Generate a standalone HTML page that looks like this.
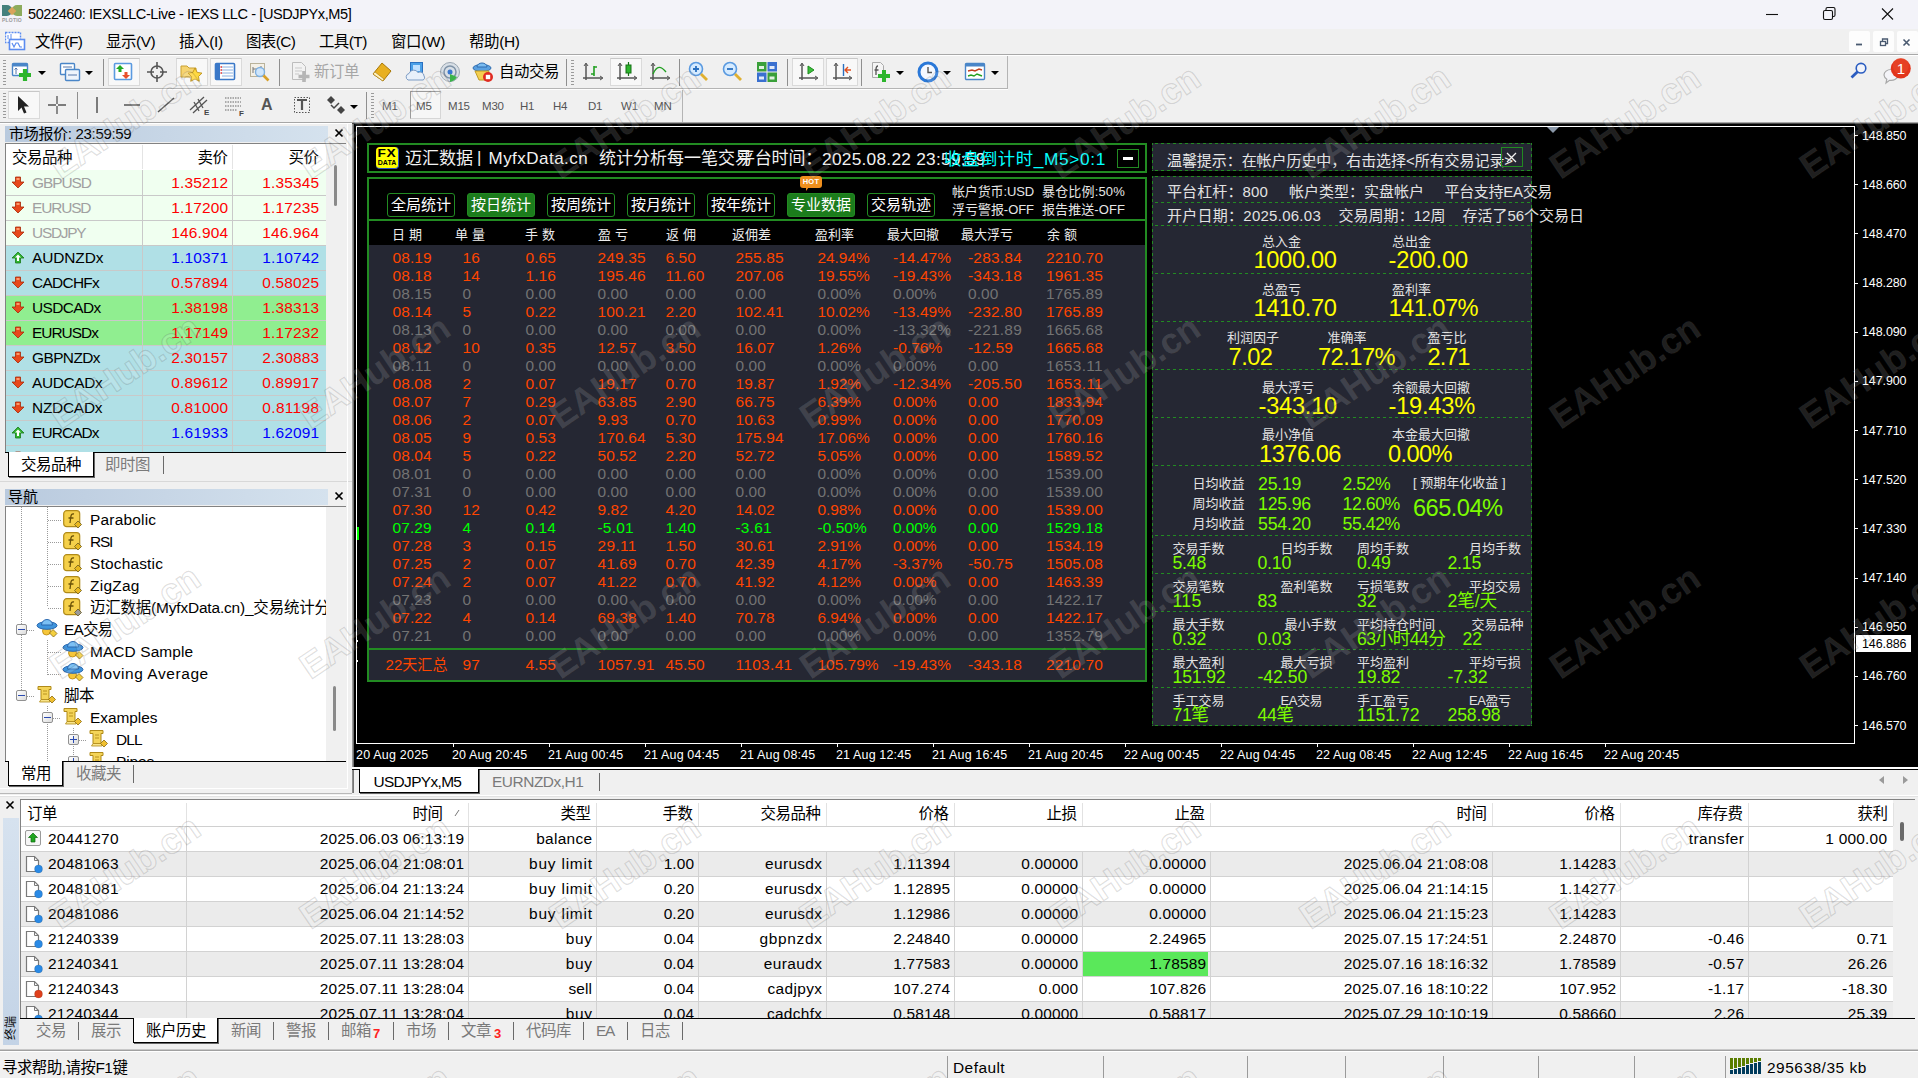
<!DOCTYPE html><html lang="zh"><head><meta charset="utf-8"><title>5022460: IEXSLLC-Live - IEXS LLC - [USDJPYx,M5]</title><style>
*{box-sizing:border-box;margin:0;padding:0}
html,body{width:1918px;height:1078px;overflow:hidden;background:#f0f0f0}
body{font-family:"Liberation Sans","Noto Sans CJK SC",sans-serif;font-size:15px;color:#000;position:relative}
.a{position:absolute;white-space:nowrap}
.t{position:absolute;white-space:nowrap;line-height:20px;height:20px}
.r{text-align:right}
.wm{position:absolute;white-space:nowrap;font-size:34px;transform:rotate(-31deg);transform-origin:0 50%;font-weight:normal;letter-spacing:1px;pointer-events:none}
</style></head><body><div class="a" style="left:0px;top:0px;width:1918px;height:29px;background:#f3f3f9"></div><div class="a" style="left:2px;top:5px;width:20px;height:18px"><div class="a" style="left:0;top:0;width:10px;height:11px;background:#44807d;border-radius:0 5px 5px 0"></div><div class="a" style="left:10px;top:0;width:10px;height:11px;background:#8dab5c;border-radius:5px 0 0 5px"></div><div class="a" style="left:7px;top:3px;width:6px;height:6px;background:#d9a45a;transform:rotate(45deg)"></div><div class="a" style="left:0;top:12px;font-size:5px;line-height:6px;color:#9a9a9a;font-weight:bold;letter-spacing:.2px">PLOTIO</div></div><div class="t" style="left:28px;top:4px;font-size:14.55px;letter-spacing:-0.416px;">5022460: IEXSLLC-Live - IEXS LLC - [USDJPYx,M5]</div><svg class="a" style="left:1750px;top:0" width="168" height="29" viewBox="0 0 168 29" fill="none" stroke="#111" stroke-width="1.1"><path d="M16 14.5h12"/><rect x="73.5" y="10.5" width="9" height="9" rx="1.5"/><path d="M76 10.5v-1.5a1.5 1.5 0 0 1 1.5-1.5h6a1.5 1.5 0 0 1 1.5 1.5v6a1.5 1.5 0 0 1-1.5 1.5h-1"/><path d="M132 8.5l11 11M143 8.5l-11 11"/></svg><div class="a" style="left:0px;top:29px;width:1918px;height:26px;background:#f0f0f0"></div><svg class="a" style="left:5px;top:31px" width="21" height="21" viewBox="0 0 21 21"><rect x="0.5" y="1.5" width="15" height="10" fill="#fff" stroke="#5b8cf0" stroke-width="1.4" stroke-dasharray="2 1"/><rect x="4.5" y="8.5" width="15" height="10" fill="#fff" stroke="#5b8cf0" stroke-width="1.6"/><path d="M7 12l2 4 2-4 2 0 2 4 2 0" fill="none" stroke="#5b8cf0" stroke-width="1.2"/><path d="M3 4v4M6 3v5" stroke="#5b8cf0" stroke-width="1"/></svg><div class="t" style="left:35px;top:32px;font-size:15.45px;letter-spacing:-0.687px;">文件(F)</div><div class="t" style="left:106px;top:32px;font-size:15.45px;letter-spacing:-0.438px;">显示(V)</div><div class="t" style="left:179px;top:32px;font-size:15.45px;letter-spacing:-0.357px;">插入(I)</div><div class="t" style="left:246px;top:32px;font-size:15.45px;letter-spacing:-0.618px;">图表(C)</div><div class="t" style="left:319px;top:32px;font-size:15.45px;letter-spacing:-0.574px;">工具(T)</div><div class="t" style="left:391px;top:32px;font-size:15.45px;letter-spacing:-0.314px;">窗口(W)</div><div class="t" style="left:469px;top:32px;font-size:15.45px;letter-spacing:-0.332px;">帮助(H)</div><div class="a" style="left:1849px;top:31px;width:21px;height:21px;background:#fdfdfd;border-radius:2px"></div><div class="a" style="left:1873px;top:31px;width:21px;height:21px;background:#fdfdfd;border-radius:2px"></div><div class="a" style="left:1897px;top:31px;width:21px;height:21px;background:#fdfdfd;border-radius:2px"></div><svg class="a" style="left:1848px;top:31px" width="70" height="21" viewBox="0 0 70 21" fill="none" stroke="#4a5a70" stroke-width="1.3"><path d="M8 13.5h6" stroke-width="1.8"/><rect x="32.5" y="10.5" width="5" height="4"/><path d="M34.5 10.5v-2.500h5v4.5h-2"/><path d="M55.500 8.5l6 6M61.500 8.5l-6 6" stroke-width="1.6"/></svg><div class="a" style="left:0px;top:54px;width:1918px;height:1px;background:#a8a8a8"></div><div class="a" style="left:0px;top:55px;width:1918px;height:1px;background:#fff"></div><div class="a" style="left:0px;top:56px;width:1918px;height:67px;background:#f0f0f0"></div><div class="a" style="left:0px;top:88px;width:1008px;height:1px;background:#b4b4b4"></div><div class="a" style="left:0px;top:89px;width:1008px;height:1px;background:#fdfdfd"></div><div class="a" style="left:1007px;top:56px;width:1px;height:33px;background:#b4b4b4"></div><div class="a" style="left:682px;top:90px;width:1px;height:32px;background:#b4b4b4"></div><div class="a" style="left:0px;top:122px;width:1918px;height:1px;background:#a6a6a6"></div><div class="a" style="left:0px;top:123px;width:354px;height:1px;background:#fff"></div><div class="a" style="left:3px;top:60px;width:3px;height:26px;background:repeating-linear-gradient(#9a9a9a 0 1px,transparent 1px 3px)"></div><div class="a" style="left:571px;top:60px;width:3px;height:26px;background:repeating-linear-gradient(#9a9a9a 0 1px,transparent 1px 3px)"></div><div class="a" style="left:3px;top:93px;width:3px;height:26px;background:repeating-linear-gradient(#9a9a9a 0 1px,transparent 1px 3px)"></div><div class="a" style="left:371px;top:93px;width:3px;height:26px;background:repeating-linear-gradient(#9a9a9a 0 1px,transparent 1px 3px)"></div><div class="a" style="left:103px;top:59px;width:1px;height:27px;background:#8f8f8f"></div><div class="a" style="left:279px;top:59px;width:1px;height:27px;background:#8f8f8f"></div><div class="a" style="left:566px;top:59px;width:1px;height:27px;background:#8f8f8f"></div><div class="a" style="left:679px;top:59px;width:1px;height:27px;background:#8f8f8f"></div><div class="a" style="left:787px;top:59px;width:1px;height:27px;background:#8f8f8f"></div><div class="a" style="left:861px;top:59px;width:1px;height:27px;background:#8f8f8f"></div><div class="a" style="left:77px;top:92px;width:1px;height:27px;background:#8f8f8f"></div><div class="a" style="left:366px;top:92px;width:1px;height:27px;background:#8f8f8f"></div><div class="a" style="left:108px;top:58px;width:32px;height:28px;background:#f8f8f8;border:1px solid #dadada;border-top-color:#c8c8c8"></div><div class="a" style="left:176px;top:58px;width:32px;height:28px;background:#f8f8f8;border:1px solid #dadada;border-top-color:#c8c8c8"></div><div class="a" style="left:210px;top:58px;width:32px;height:28px;background:#f8f8f8;border:1px solid #dadada;border-top-color:#c8c8c8"></div><div class="a" style="left:610px;top:58px;width:32px;height:28px;background:#f8f8f8;border:1px solid #dadada;border-top-color:#c8c8c8"></div><div class="a" style="left:792px;top:58px;width:32px;height:28px;background:#f8f8f8;border:1px solid #dadada;border-top-color:#c8c8c8"></div><div class="a" style="left:826px;top:58px;width:32px;height:28px;background:#f8f8f8;border:1px solid #dadada;border-top-color:#c8c8c8"></div><div class="a" style="left:8px;top:91px;width:32px;height:28px;background:#f8f8f8;border:1px solid #dadada;border-top-color:#c8c8c8"></div><div class="a" style="left:410px;top:91px;width:31px;height:28px;background:#f6f6f6;border:1px solid #d6d6d6;border-left-color:#9a9a9a;border-top-color:#9a9a9a"></div><div class="a" style="left:38px;top:71px;border-left:4px solid transparent;border-right:4px solid transparent;border-top:4px solid #000"></div><div class="a" style="left:85px;top:71px;border-left:4px solid transparent;border-right:4px solid transparent;border-top:4px solid #000"></div><div class="a" style="left:896px;top:71px;border-left:4px solid transparent;border-right:4px solid transparent;border-top:4px solid #000"></div><div class="a" style="left:943px;top:71px;border-left:4px solid transparent;border-right:4px solid transparent;border-top:4px solid #000"></div><div class="a" style="left:991px;top:71px;border-left:4px solid transparent;border-right:4px solid transparent;border-top:4px solid #000"></div><div class="a" style="left:350px;top:105px;border-left:4px solid transparent;border-right:4px solid transparent;border-top:4px solid #000"></div><svg class="a" style="left:11px;top:61px" width="22" height="22" viewBox="0 0 22 22"><rect x="1.5" y="2.5" width="15" height="12" rx="1" fill="#fff" stroke="#4a86c8" stroke-width="1.4"/><rect x="1.5" y="2.5" width="15" height="3" fill="#4a86c8"/><path d="M5 7v6M3.5 8.5L5 7l1.5 1.5" stroke="#5577aa" fill="none"/><path d="M14 8v12M8 14h12" stroke="#2cb52c" stroke-width="4.2"/></svg><svg class="a" style="left:59px;top:61px" width="22" height="22" viewBox="0 0 22 22"><rect x="1.5" y="2.5" width="14" height="11" rx="1" fill="#fff" stroke="#4a86c8" stroke-width="1.4"/><rect x="6.5" y="8.5" width="14" height="11" rx="1" fill="#eef4fb" stroke="#4a86c8" stroke-width="1.4"/><path d="M4 6h9M9 14h9" stroke="#5577aa"/></svg><svg class="a" style="left:112px;top:61px" width="22" height="22" viewBox="0 0 22 22"><rect x="2.5" y="2.5" width="17" height="16" rx="1" fill="#fff" stroke="#5a9ae0" stroke-width="1.6"/><path d="M8 4l4 4h-2.5v3h-3V8H4z" fill="#22aa22"/><path d="M14 18l-4-4h2.500v-3h3v3H18z" fill="#e8502a"/></svg><svg class="a" style="left:146px;top:61px" width="22" height="22" viewBox="0 0 22 22"><circle cx="11" cy="11" r="6" fill="none" stroke="#555" stroke-width="1.6"/><path d="M11 1v7M11 14v7M1 11h7M14 11h7" stroke="#555" stroke-width="1.6"/></svg><svg class="a" style="left:180px;top:61px" width="22" height="22" viewBox="0 0 22 22"><path d="M1 5h6l2 2h7v9H1z" fill="#f6d470" stroke="#c9a030"/><path d="M15 7l2.2 4.400 4.800.7-3.500 3.400.8 4.800L15 18l-4.300 2.300.8-4.800L8 12.100l4.800-.7z" fill="#ffd840" stroke="#b88a10" stroke-width=".8"/></svg><svg class="a" style="left:214px;top:61px" width="22" height="22" viewBox="0 0 22 22"><rect x="1.500" y="2.500" width="19" height="16" rx="1" fill="#fff" stroke="#3a78c8" stroke-width="1.6"/><rect x="2" y="3" width="4" height="15" fill="#3a78c8"/><path d="M8 6h11M8 9h11M8 12h11M8 15h11" stroke="#8ab0e0"/><path d="M6.500 6h1.500M6.500 9h1.500M6.500 12h1.500" stroke="#e03030" stroke-width="1.4"/></svg><svg class="a" style="left:249px;top:61px" width="22" height="22" viewBox="0 0 22 22"><rect x="1.500" y="2.500" width="14" height="13" fill="#f4f0e6" stroke="#b9b29a"/><path d="M4 6v6M12 5v6M4 8h8" stroke="#777"/><circle cx="11" cy="11" r="4.500" fill="#cfe6fb" stroke="#7fb0e0" stroke-width="1.400"/><path d="M14.500 14.500l5 5" stroke="#d8a028" stroke-width="2.600"/></svg><svg class="a" style="left:289px;top:61px" width="22" height="22" viewBox="0 0 22 22"><path d="M3.500 1.500h9l4 4v13h-13z" fill="#f2f2f2" stroke="#bdbdbd"/><path d="M6 7h7M6 10h7M6 13h4" stroke="#c9c9c9"/><path d="M15 10v11M9.500 15.500h11" stroke="#b5b5b5" stroke-width="3.600"/></svg><div class="t" style="left:314px;top:62px;font-size:15.45px;letter-spacing:-0.45px;color:#a6a6a6">新订单</div><svg class="a" style="left:371px;top:61px" width="22" height="22" viewBox="0 0 22 22"><path d="M2 13L11 2l9 8-8 10z" fill="#e8b020" stroke="#a87808"/><path d="M2 13l10 7 1-2L4 11z" fill="#fff2c0" stroke="#a87808" stroke-width=".6"/></svg><svg class="a" style="left:405px;top:61px" width="22" height="22" viewBox="0 0 22 22"><rect x="5.500" y="1.500" width="12" height="11" fill="#4aa0e8" stroke="#2a70c0"/><rect x="8" y="4" width="7" height="6" fill="#bfe0ff"/><path d="M3 19a3.500 3.500 0 0 1 1-6.500 5 5 0 0 1 9-1 4 4 0 0 1 6 3.500 2.500 2.500 0 0 1-1 4z" fill="#e8f0fa" stroke="#7d9cc4"/></svg><svg class="a" style="left:439px;top:61px" width="22" height="22" viewBox="0 0 22 22"><circle cx="11" cy="11" r="9.500" fill="#d8dfe6" stroke="#9aa6b2"/><circle cx="11" cy="11" r="6" fill="none" stroke="#7f93a8" stroke-width="1.500"/><circle cx="11" cy="11" r="2.500" fill="#3a78d0"/><path d="M11 21a10 10 0 0 0 7-5l-7-3z" fill="#3cb34a"/></svg><svg class="a" style="left:472px;top:61px" width="22" height="22" viewBox="0 0 22 22"><ellipse cx="10" cy="7" rx="9" ry="3.500" fill="#5aa0e0" stroke="#2f6cb0"/><path d="M5 6a5 4 0 0 1 10 0z" fill="#7bbcf0" stroke="#2f6cb0"/><path d="M3 10h14l-3 9H7z" fill="#f4cf50" stroke="#c09a20"/><circle cx="16" cy="16" r="5" fill="#e02a20"/><rect x="13.800" y="13.800" width="4.400" height="4.400" fill="#fff"/></svg><div class="t" style="left:499px;top:62px;font-size:15.45px;letter-spacing:-0.45px;">自动交易</div><svg class="a" style="left:582px;top:61px" width="22" height="22" viewBox="0 0 22 22"><path d="M4 3v16M1 17h19" stroke="#555" stroke-width="1.500" fill="none"/><path d="M2 5l2-3 2 3M18 15l3 2-3 2" fill="none" stroke="#555"/><path d="M12 5v10M12 6h3M9 13h3" stroke="#22a022" stroke-width="1.600" fill="none"/></svg><svg class="a" style="left:616px;top:61px" width="22" height="22" viewBox="0 0 22 22"><path d="M4 3v16M1 17h19" stroke="#555" stroke-width="1.500" fill="none"/><path d="M2 5l2-3 2 3M18 15l3 2-3 2" fill="none" stroke="#555"/><path d="M12.500 1v14" stroke="#167016" stroke-width="1.200"/><rect x="10" y="4" width="5" height="8" fill="#2cb52c" stroke="#167016"/></svg><svg class="a" style="left:649px;top:61px" width="22" height="22" viewBox="0 0 22 22"><path d="M4 3v16M1 17h19" stroke="#555" stroke-width="1.500" fill="none"/><path d="M2 5l2-3 2 3M18 15l3 2-3 2" fill="none" stroke="#555"/><path d="M4 13c4-9 8-8 13-2" stroke="#22a022" stroke-width="1.400" fill="none"/></svg><svg class="a" style="left:687px;top:61px" width="22" height="22" viewBox="0 0 22 22"><circle cx="9" cy="8" r="6.500" fill="#d6ebff" stroke="#5a9ae0" stroke-width="1.600"/><path d="M9 5v6M6 8h6" stroke="#2a70c0" stroke-width="1.800"/><path d="M14 13l6 6" stroke="#e0b030" stroke-width="2.800"/></svg><svg class="a" style="left:721px;top:61px" width="22" height="22" viewBox="0 0 22 22"><circle cx="9" cy="8" r="6.500" fill="#d6ebff" stroke="#5a9ae0" stroke-width="1.600"/><path d="M6 8h6" stroke="#2a70c0" stroke-width="1.800"/><path d="M14 13l6 6" stroke="#e0b030" stroke-width="2.800"/></svg><svg class="a" style="left:756px;top:61px" width="22" height="22" viewBox="0 0 22 22"><rect x="1" y="1" width="9.500" height="9.500" fill="#3aa03a"/><rect x="11.500" y="1" width="9.500" height="9.500" fill="#3a70d0"/><rect x="1" y="11.500" width="9.500" height="9.500" fill="#3a70d0"/><rect x="11.500" y="11.500" width="9.500" height="9.500" fill="#3aa03a"/><path d="M3 5h5v3H3zM13.500 5h5v3h-5zM3 15.500h5v3H3zM13.500 15.500h5v3h-5z" fill="#fff" opacity=".85"/></svg><svg class="a" style="left:797px;top:61px" width="22" height="22" viewBox="0 0 22 22"><path d="M5 3v16M2 17h18" stroke="#555" stroke-width="1.500" fill="none"/><path d="M3 5l2-3 2 3M18 15l3 2-3 2" fill="none" stroke="#555"/><path d="M11 5v8l6-4z" fill="#3cc03c" stroke="#1c8a1c"/></svg><svg class="a" style="left:831px;top:61px" width="22" height="22" viewBox="0 0 22 22"><path d="M5 3v16M2 17h18" stroke="#555" stroke-width="1.500" fill="none"/><path d="M3 5l2-3 2 3M18 15l3 2-3 2" fill="none" stroke="#555"/><path d="M12.500 3v12" stroke="#2a70c0" stroke-width="1.400"/><path d="M20 9h-6M17 6l-3 3 3 3" stroke="#e05020" stroke-width="1.400" fill="none"/></svg><svg class="a" style="left:870px;top:61px" width="22" height="22" viewBox="0 0 22 22"><path d="M2.500 1.500h8l3 3v12h-11z" fill="#f4f4f4" stroke="#aaa"/><path d="M8 5c-2 0-2 2-2 4v5M4.500 9h4" stroke="#555" stroke-width="1.300" fill="none"/><path d="M14 9v12M8 15h12" stroke="#2cb52c" stroke-width="4"/></svg><svg class="a" style="left:917px;top:61px" width="22" height="22" viewBox="0 0 22 22"><circle cx="11" cy="11" r="9" fill="#f4f8ff" stroke="#2a78d8" stroke-width="3"/><path d="M11 6v5.500h4" stroke="#555" stroke-width="1.400" fill="none"/></svg><svg class="a" style="left:964px;top:61px" width="22" height="22" viewBox="0 0 22 22"><rect x="1.500" y="2.500" width="19" height="16" rx="1" fill="#fff" stroke="#4a86c8" stroke-width="1.400"/><rect x="1.500" y="2.500" width="19" height="3" fill="#4a86c8"/><path d="M4 10l4-1 3 1 4-2 3 1" stroke="#c04020" stroke-width="1.400" fill="none"/><path d="M4 15l3-1 3 1 3-2 5 2" stroke="#22a022" stroke-width="1.400" fill="none"/></svg><svg class="a" style="left:1848px;top:60px" width="22" height="22" viewBox="0 0 22 22"><circle cx="13" cy="8.200" r="4.800" fill="#f2f4fa" stroke="#2a5cc0" stroke-width="1.600"/><path d="M9.500 11.800L3.500 17.500" stroke="#2a5cc0" stroke-width="2.800"/></svg><svg class="a" style="left:1880px;top:56px" width="34" height="30" viewBox="0 0 34 30"><path d="M4 19a7 5.500 0 0 1 14 0 7 5.500 0 0 1-8.500 5.300L6 27l.8-3.800A5.500 5.500 0 0 1 4 19z" fill="#f4f4f8" stroke="#a8a8a8" stroke-width="1.200"/><circle cx="20.800" cy="12.500" r="10" fill="#e2351c"/><circle cx="20.800" cy="10" r="8" fill="#ea4a2c" opacity=".6"/><text x="20.800" y="18" font-size="15" fill="#fff" text-anchor="middle" font-family="'Liberation Sans',sans-serif">1</text></svg><svg class="a" style="left:12px;top:94px" width="22" height="22" viewBox="0 0 22 22"><path d="M6 2v15l3.500-3.500 2.500 6 2.500-1-2.500-6h5z" fill="#222"/></svg><svg class="a" style="left:46px;top:94px" width="22" height="22" viewBox="0 0 22 22"><path d="M11 2v18M2 11h18" stroke="#555" stroke-width="1.300"/><rect x="10" y="10" width="2" height="2" fill="#f0f0f0"/></svg><svg class="a" style="left:86px;top:94px" width="22" height="22" viewBox="0 0 22 22"><path d="M11 3v16" stroke="#555" stroke-width="1.500"/></svg><svg class="a" style="left:121px;top:94px" width="22" height="22" viewBox="0 0 22 22"><path d="M3 11h16" stroke="#555" stroke-width="1.500"/></svg><svg class="a" style="left:155px;top:94px" width="22" height="22" viewBox="0 0 22 22"><path d="M3 18L19 4" stroke="#555" stroke-width="1.500"/></svg><svg class="a" style="left:188px;top:94px" width="22" height="22" viewBox="0 0 22 22"><path d="M2 16L16 3M5 19L19 6M6 8l5 9M10 5l5 9" stroke="#555" stroke-width="1.300" fill="none"/><text x="16" y="21" font-size="8" font-weight="bold" fill="#444" font-family="'Liberation Sans',sans-serif">E</text></svg><svg class="a" style="left:223px;top:94px" width="22" height="22" viewBox="0 0 22 22"><path d="M2 4h16M2 8h16M2 12h16M2 16h12" stroke="#666" stroke-width="1.200" stroke-dasharray="1.500 1"/><text x="16" y="22" font-size="8" font-weight="bold" fill="#444" font-family="'Liberation Sans',sans-serif">F</text></svg><div class="t" style="left:261px;top:95px;font-size:16px;font-weight:bold;color:#555">A</div><svg class="a" style="left:291px;top:94px" width="22" height="22" viewBox="0 0 22 22"><rect x="3.500" y="3.500" width="15" height="15" fill="none" stroke="#555" stroke-dasharray="1.500 1.500"/><path d="M6 6h10M11 6v10" stroke="#555" stroke-width="2.200"/></svg><svg class="a" style="left:325px;top:94px" width="22" height="22" viewBox="0 0 22 22"><path d="M6 2l4 4-4 4-4-4zM16 12l4 4-4 4-4-4z" fill="#444"/><path d="M6 11l3 3 5-5" stroke="#444" stroke-width="1.500" fill="none"/></svg><div class="t" style="left:382px;top:96px;font-size:11.500px;color:#555;letter-spacing:-.2px">M1</div><div class="t" style="left:416px;top:96px;font-size:11.500px;color:#555;letter-spacing:-.2px">M5</div><div class="t" style="left:448px;top:96px;font-size:11.500px;color:#555;letter-spacing:-.2px">M15</div><div class="t" style="left:482px;top:96px;font-size:11.500px;color:#555;letter-spacing:-.2px">M30</div><div class="t" style="left:520px;top:96px;font-size:11.500px;color:#555;letter-spacing:-.2px">H1</div><div class="t" style="left:553px;top:96px;font-size:11.500px;color:#555;letter-spacing:-.2px">H4</div><div class="t" style="left:588px;top:96px;font-size:11.500px;color:#555;letter-spacing:-.2px">D1</div><div class="t" style="left:621px;top:96px;font-size:11.500px;color:#555;letter-spacing:-.2px">W1</div><div class="t" style="left:654px;top:96px;font-size:11.500px;color:#555;letter-spacing:-.2px">MN</div><div class="a" style="left:0px;top:124px;width:352px;height:364px;background:#f0f0f0"></div><div class="a" style="left:5px;top:126px;width:323px;height:16px;background:linear-gradient(90deg,#b9cade,#d5e2ee)"></div><div class="t" style="left:9px;top:124px;font-size:15px;letter-spacing:-0.31px;">市场报价: 23:59:59</div><svg class="a" style="left:334px;top:128px" width="10" height="10" viewBox="0 0 10 10"><path d="M1.5 1.500l7 7M8.500 1.500l-7 7" stroke="#000" stroke-width="1.700"/></svg><div class="a" style="left:5px;top:143px;width:341px;height:310px;background:#fff;border:1px solid #828282;border-right:0;border-bottom:0"></div><div class="a" style="left:326px;top:144px;width:20px;height:309px;background:#f0f0f0"></div><div class="a" style="left:334px;top:165px;width:3px;height:41px;background:#8a8a8a;border-radius:2px"></div><div class="t" style="left:12px;top:148px;font-size:15.45px;letter-spacing:-0.45px;">交易品种</div><div class="t r" style="left:-272px;width:500px;top:148px;margin-left:-0.45px;font-size:15.45px;letter-spacing:-0.45px;">卖价</div><div class="t r" style="left:-181px;width:500px;top:148px;margin-left:-0.45px;font-size:15.45px;letter-spacing:-0.45px;">买价</div><div class="a" style="left:142px;top:145px;width:1px;height:24px;background:#e4e4e4"></div><div class="a" style="left:232px;top:145px;width:1px;height:24px;background:#e4e4e4"></div><div class="a" style="left:6px;top:170px;width:320px;height:283px;overflow:hidden"><div class="a" style="left:0px;top:0px;width:320px;height:26px;background:#f0fff0"></div><div class="a" style="left:0px;top:25px;width:320px;height:1px;background:#c9c9c9"></div><div class="a" style="left:136px;top:0px;width:1px;height:26px;background:#c9c9c9"></div><div class="a" style="left:226px;top:0px;width:1px;height:26px;background:#c9c9c9"></div><svg class="a" style="left:5px;top:6px" width="14" height="13" viewBox="0 0 14 13"><path d="M7 12L1 6h3.500V1h5v5H13z" fill="#e8481c" stroke="#a82a08" stroke-width=".8"/><path d="M5.500 2h3v2h-3z" fill="#ff9a6a"/></svg><div class="t" style="left:26px;top:3px;font-size:15.45px;letter-spacing:-1.066px;color:#a0a0a0">GBPUSD</div><div class="t r" style="left:-278px;width:500px;top:3px;margin-left:0.165px;font-size:15.45px;letter-spacing:0.165px;color:#ff0000">1.35212</div><div class="t r" style="left:-187px;width:500px;top:3px;margin-left:0.165px;font-size:15.45px;letter-spacing:0.165px;color:#ff0000">1.35345</div><div class="a" style="left:0px;top:26px;width:320px;height:25px;background:#f0fff0"></div><div class="a" style="left:0px;top:50px;width:320px;height:1px;background:#c9c9c9"></div><div class="a" style="left:136px;top:25px;width:1px;height:26px;background:#c9c9c9"></div><div class="a" style="left:226px;top:25px;width:1px;height:26px;background:#c9c9c9"></div><svg class="a" style="left:5px;top:31px" width="14" height="13" viewBox="0 0 14 13"><path d="M7 12L1 6h3.500V1h5v5H13z" fill="#e8481c" stroke="#a82a08" stroke-width=".8"/><path d="M5.500 2h3v2h-3z" fill="#ff9a6a"/></svg><div class="t" style="left:26px;top:28px;font-size:15.45px;letter-spacing:-1.14px;color:#a0a0a0">EURUSD</div><div class="t r" style="left:-278px;width:500px;top:28px;margin-left:0.165px;font-size:15.45px;letter-spacing:0.165px;color:#ff0000">1.17200</div><div class="t r" style="left:-187px;width:500px;top:28px;margin-left:0.165px;font-size:15.45px;letter-spacing:0.165px;color:#ff0000">1.17235</div><div class="a" style="left:0px;top:51px;width:320px;height:25px;background:#f0fff0"></div><div class="a" style="left:0px;top:75px;width:320px;height:1px;background:#c9c9c9"></div><div class="a" style="left:136px;top:50px;width:1px;height:26px;background:#c9c9c9"></div><div class="a" style="left:226px;top:50px;width:1px;height:26px;background:#c9c9c9"></div><svg class="a" style="left:5px;top:56px" width="14" height="13" viewBox="0 0 14 13"><path d="M7 12L1 6h3.500V1h5v5H13z" fill="#e8481c" stroke="#a82a08" stroke-width=".8"/><path d="M5.500 2h3v2h-3z" fill="#ff9a6a"/></svg><div class="t" style="left:26px;top:53px;font-size:15.45px;letter-spacing:-1.266px;color:#a0a0a0">USDJPY</div><div class="t r" style="left:-278px;width:500px;top:53px;margin-left:0.165px;font-size:15.45px;letter-spacing:0.165px;color:#ff0000">146.904</div><div class="t r" style="left:-187px;width:500px;top:53px;margin-left:0.165px;font-size:15.45px;letter-spacing:0.165px;color:#ff0000">146.964</div><div class="a" style="left:0px;top:76px;width:320px;height:25px;background:#b0e0e6"></div><div class="a" style="left:0px;top:100px;width:320px;height:1px;background:#c9c9c9"></div><div class="a" style="left:136px;top:75px;width:1px;height:26px;background:#c9c9c9"></div><div class="a" style="left:226px;top:75px;width:1px;height:26px;background:#c9c9c9"></div><svg class="a" style="left:5px;top:81px" width="14" height="13" viewBox="0 0 14 13"><path d="M7 1l6 6H9.500v5h-5V7H1z" fill="#2fb52f" stroke="#1a7a1a" stroke-width=".8"/><path d="M7 3.500l3 3H8v3.500H6V6.500H4z" fill="#fff"/></svg><div class="t" style="left:26px;top:78px;font-size:15.45px;letter-spacing:-0.1px;color:#000">AUDNZDx</div><div class="t r" style="left:-278px;width:500px;top:78px;margin-left:0.165px;font-size:15.45px;letter-spacing:0.165px;color:#0000ff">1.10371</div><div class="t r" style="left:-187px;width:500px;top:78px;margin-left:0.165px;font-size:15.45px;letter-spacing:0.165px;color:#0000ff">1.10742</div><div class="a" style="left:0px;top:101px;width:320px;height:25px;background:#b0e0e6"></div><div class="a" style="left:0px;top:125px;width:320px;height:1px;background:#c9c9c9"></div><div class="a" style="left:136px;top:100px;width:1px;height:26px;background:#c9c9c9"></div><div class="a" style="left:226px;top:100px;width:1px;height:26px;background:#c9c9c9"></div><svg class="a" style="left:5px;top:106px" width="14" height="13" viewBox="0 0 14 13"><path d="M7 12L1 6h3.500V1h5v5H13z" fill="#e8481c" stroke="#a82a08" stroke-width=".8"/><path d="M5.500 2h3v2h-3z" fill="#ff9a6a"/></svg><div class="t" style="left:26px;top:103px;font-size:15.45px;letter-spacing:-0.708px;color:#000">CADCHFx</div><div class="t r" style="left:-278px;width:500px;top:103px;margin-left:0.165px;font-size:15.45px;letter-spacing:0.165px;color:#ff0000">0.57894</div><div class="t r" style="left:-187px;width:500px;top:103px;margin-left:0.165px;font-size:15.45px;letter-spacing:0.165px;color:#ff0000">0.58025</div><div class="a" style="left:0px;top:126px;width:320px;height:25px;background:#90ee90"></div><div class="a" style="left:0px;top:150px;width:320px;height:1px;background:#c9c9c9"></div><div class="a" style="left:136px;top:125px;width:1px;height:26px;background:#c9c9c9"></div><div class="a" style="left:226px;top:125px;width:1px;height:26px;background:#c9c9c9"></div><svg class="a" style="left:5px;top:131px" width="14" height="13" viewBox="0 0 14 13"><path d="M7 12L1 6h3.500V1h5v5H13z" fill="#e8481c" stroke="#a82a08" stroke-width=".8"/><path d="M5.500 2h3v2h-3z" fill="#ff9a6a"/></svg><div class="t" style="left:26px;top:128px;font-size:15.45px;letter-spacing:-0.605px;color:#000">USDCADx</div><div class="t r" style="left:-278px;width:500px;top:128px;margin-left:0.165px;font-size:15.45px;letter-spacing:0.165px;color:#ff0000">1.38198</div><div class="t r" style="left:-187px;width:500px;top:128px;margin-left:0.165px;font-size:15.45px;letter-spacing:0.165px;color:#ff0000">1.38313</div><div class="a" style="left:0px;top:151px;width:320px;height:25px;background:#90ee90"></div><div class="a" style="left:0px;top:175px;width:320px;height:1px;background:#c9c9c9"></div><div class="a" style="left:136px;top:150px;width:1px;height:26px;background:#c9c9c9"></div><div class="a" style="left:226px;top:150px;width:1px;height:26px;background:#c9c9c9"></div><svg class="a" style="left:5px;top:156px" width="14" height="13" viewBox="0 0 14 13"><path d="M7 12L1 6h3.500V1h5v5H13z" fill="#e8481c" stroke="#a82a08" stroke-width=".8"/><path d="M5.500 2h3v2h-3z" fill="#ff9a6a"/></svg><div class="t" style="left:26px;top:153px;font-size:15.45px;letter-spacing:-0.999px;color:#000">EURUSDx</div><div class="t r" style="left:-278px;width:500px;top:153px;margin-left:0.165px;font-size:15.45px;letter-spacing:0.165px;color:#ff0000">1.17149</div><div class="t r" style="left:-187px;width:500px;top:153px;margin-left:0.165px;font-size:15.45px;letter-spacing:0.165px;color:#ff0000">1.17232</div><div class="a" style="left:0px;top:176px;width:320px;height:25px;background:#b0e0e6"></div><div class="a" style="left:0px;top:200px;width:320px;height:1px;background:#c9c9c9"></div><div class="a" style="left:136px;top:175px;width:1px;height:26px;background:#c9c9c9"></div><div class="a" style="left:226px;top:175px;width:1px;height:26px;background:#c9c9c9"></div><svg class="a" style="left:5px;top:181px" width="14" height="13" viewBox="0 0 14 13"><path d="M7 12L1 6h3.500V1h5v5H13z" fill="#e8481c" stroke="#a82a08" stroke-width=".8"/><path d="M5.500 2h3v2h-3z" fill="#ff9a6a"/></svg><div class="t" style="left:26px;top:178px;font-size:15.45px;letter-spacing:-0.581px;color:#000">GBPNZDx</div><div class="t r" style="left:-278px;width:500px;top:178px;margin-left:0.165px;font-size:15.45px;letter-spacing:0.165px;color:#ff0000">2.30157</div><div class="t r" style="left:-187px;width:500px;top:178px;margin-left:0.165px;font-size:15.45px;letter-spacing:0.165px;color:#ff0000">2.30883</div><div class="a" style="left:0px;top:201px;width:320px;height:25px;background:#b0e0e6"></div><div class="a" style="left:0px;top:225px;width:320px;height:1px;background:#c9c9c9"></div><div class="a" style="left:136px;top:200px;width:1px;height:26px;background:#c9c9c9"></div><div class="a" style="left:226px;top:200px;width:1px;height:26px;background:#c9c9c9"></div><svg class="a" style="left:5px;top:206px" width="14" height="13" viewBox="0 0 14 13"><path d="M7 12L1 6h3.500V1h5v5H13z" fill="#e8481c" stroke="#a82a08" stroke-width=".8"/><path d="M5.500 2h3v2h-3z" fill="#ff9a6a"/></svg><div class="t" style="left:26px;top:203px;font-size:15.45px;letter-spacing:-0.348px;color:#000">AUDCADx</div><div class="t r" style="left:-278px;width:500px;top:203px;margin-left:0.165px;font-size:15.45px;letter-spacing:0.165px;color:#ff0000">0.89612</div><div class="t r" style="left:-187px;width:500px;top:203px;margin-left:0.165px;font-size:15.45px;letter-spacing:0.165px;color:#ff0000">0.89917</div><div class="a" style="left:0px;top:226px;width:320px;height:25px;background:#b0e0e6"></div><div class="a" style="left:0px;top:250px;width:320px;height:1px;background:#c9c9c9"></div><div class="a" style="left:136px;top:225px;width:1px;height:26px;background:#c9c9c9"></div><div class="a" style="left:226px;top:225px;width:1px;height:26px;background:#c9c9c9"></div><svg class="a" style="left:5px;top:231px" width="14" height="13" viewBox="0 0 14 13"><path d="M7 12L1 6h3.500V1h5v5H13z" fill="#e8481c" stroke="#a82a08" stroke-width=".8"/><path d="M5.500 2h3v2h-3z" fill="#ff9a6a"/></svg><div class="t" style="left:26px;top:228px;font-size:15.45px;letter-spacing:-0.251px;color:#000">NZDCADx</div><div class="t r" style="left:-278px;width:500px;top:228px;margin-left:0.165px;font-size:15.45px;letter-spacing:0.165px;color:#ff0000">0.81000</div><div class="t r" style="left:-187px;width:500px;top:228px;margin-left:0.329px;font-size:15.45px;letter-spacing:0.329px;color:#ff0000">0.81198</div><div class="a" style="left:0px;top:251px;width:320px;height:25px;background:#b0e0e6"></div><div class="a" style="left:0px;top:275px;width:320px;height:1px;background:#c9c9c9"></div><div class="a" style="left:136px;top:250px;width:1px;height:26px;background:#c9c9c9"></div><div class="a" style="left:226px;top:250px;width:1px;height:26px;background:#c9c9c9"></div><svg class="a" style="left:5px;top:256px" width="14" height="13" viewBox="0 0 14 13"><path d="M7 1l6 6H9.500v5h-5V7H1z" fill="#2fb52f" stroke="#1a7a1a" stroke-width=".8"/><path d="M7 3.500l3 3H8v3.500H6V6.500H4z" fill="#fff"/></svg><div class="t" style="left:26px;top:253px;font-size:15.45px;letter-spacing:-0.892px;color:#000">EURCADx</div><div class="t r" style="left:-278px;width:500px;top:253px;margin-left:0.165px;font-size:15.45px;letter-spacing:0.165px;color:#0000ff">1.61933</div><div class="t r" style="left:-187px;width:500px;top:253px;margin-left:0.165px;font-size:15.45px;letter-spacing:0.165px;color:#0000ff">1.62091</div><div class="a" style="left:0px;top:276px;width:320px;height:25px;background:#b0e0e6"></div><div class="a" style="left:0px;top:300px;width:320px;height:1px;background:#c9c9c9"></div><div class="a" style="left:136px;top:275px;width:1px;height:26px;background:#c9c9c9"></div><div class="a" style="left:226px;top:275px;width:1px;height:26px;background:#c9c9c9"></div><svg class="a" style="left:5px;top:281px" width="14" height="13" viewBox="0 0 14 13"><path d="M7 12L1 6h3.500V1h5v5H13z" fill="#e8481c" stroke="#a82a08" stroke-width=".8"/><path d="M5.500 2h3v2h-3z" fill="#ff9a6a"/></svg><div class="t" style="left:26px;top:278px;font-size:15.45px;letter-spacing:-0.829px;color:#000">GBPCADx</div><div class="t r" style="left:-278px;width:500px;top:278px;margin-left:0.165px;font-size:15.45px;letter-spacing:0.165px;color:#ff0000">1.86971</div><div class="t r" style="left:-187px;width:500px;top:278px;margin-left:0.165px;font-size:15.45px;letter-spacing:0.165px;color:#ff0000">1.87471</div></div><div class="a" style="left:5px;top:452px;width:341px;height:1px;background:#000"></div><div class="a" style="left:5px;top:453px;width:341px;height:28px;background:#f0f0f0"></div><div class="a" style="left:8px;top:452px;width:86px;height:25px;background:#fff;border:1px solid #000;border-top:0;box-shadow:1px 1px 0 #666"></div><div class="t" style="left:21px;top:455px;font-size:15.45px;letter-spacing:-0.45px;">交易品种</div><div class="t" style="left:105px;top:455px;font-size:15.45px;letter-spacing:-0.45px;color:#7a7a7a">即时图</div><div class="a" style="left:163px;top:456px;width:1px;height:18px;background:#6a6a6a"></div><div class="a" style="left:0px;top:481px;width:354px;height:1px;background:#d8d8d8"></div><div class="a" style="left:5px;top:489px;width:323px;height:16px;background:linear-gradient(90deg,#b9cade,#d5e2ee)"></div><div class="t" style="left:8px;top:487px;font-size:15px;letter-spacing:0.0px;">导航</div><svg class="a" style="left:334px;top:491px" width="10" height="10" viewBox="0 0 10 10"><path d="M1.500 1.500l7 7M8.500 1.500l-7 7" stroke="#000" stroke-width="1.700"/></svg><div class="a" style="left:5px;top:506px;width:341px;height:256px;background:#fff;border:1px solid #828282;border-right:0;border-bottom:0"></div><div class="a" style="left:326px;top:507px;width:20px;height:255px;background:#f0f0f0"></div><div class="a" style="left:333px;top:686px;width:3px;height:45px;background:#8a8a8a;border-radius:2px"></div><div class="a" style="left:6px;top:507px;width:320px;height:255px;overflow:hidden"><div class="a" style="left:15px;top:0px;width:1px;height:188px;background:repeating-linear-gradient(#9a9a9a 0 1px,transparent 1px 2px)"></div><div class="a" style="left:41px;top:0px;width:1px;height:100px;background:repeating-linear-gradient(#9a9a9a 0 1px,transparent 1px 2px)"></div><div class="a" style="left:42px;top:13px;width:14px;height:1px;background:repeating-linear-gradient(90deg,#9a9a9a 0 1px,transparent 1px 2px)"></div><svg class="a" style="left:57px;top:3px" width="20" height="19" viewBox="0 0 20 19"><rect x=".7" y=".7" width="16" height="16" rx="3" fill="#f5d04a" stroke="#b08a18" stroke-width="1.200"/><path d="M11 4c-2.500-.5-3 1-3.300 3.500L7 13M5.500 8h5" stroke="#6a5208" stroke-width="1.300" fill="none"/><path d="M15 11l3.500 3.500L15 18l-3.500-3.500z" fill="#e8b820" stroke="#6a5a20" stroke-width=".8"/></svg><div class="t" style="left:84px;top:3px;font-size:15.45px;letter-spacing:0.214px;">Parabolic</div><div class="a" style="left:42px;top:35px;width:14px;height:1px;background:repeating-linear-gradient(90deg,#9a9a9a 0 1px,transparent 1px 2px)"></div><svg class="a" style="left:57px;top:25px" width="20" height="19" viewBox="0 0 20 19"><rect x=".7" y=".7" width="16" height="16" rx="3" fill="#f5d04a" stroke="#b08a18" stroke-width="1.200"/><path d="M11 4c-2.500-.5-3 1-3.300 3.500L7 13M5.500 8h5" stroke="#6a5208" stroke-width="1.300" fill="none"/><path d="M15 11l3.500 3.500L15 18l-3.500-3.500z" fill="#e8b820" stroke="#6a5a20" stroke-width=".8"/></svg><div class="t" style="left:84px;top:25px;font-size:15.45px;letter-spacing:-1.261px;">RSI</div><div class="a" style="left:42px;top:57px;width:14px;height:1px;background:repeating-linear-gradient(90deg,#9a9a9a 0 1px,transparent 1px 2px)"></div><svg class="a" style="left:57px;top:47px" width="20" height="19" viewBox="0 0 20 19"><rect x=".7" y=".7" width="16" height="16" rx="3" fill="#f5d04a" stroke="#b08a18" stroke-width="1.200"/><path d="M11 4c-2.500-.5-3 1-3.300 3.500L7 13M5.500 8h5" stroke="#6a5208" stroke-width="1.300" fill="none"/><path d="M15 11l3.500 3.500L15 18l-3.500-3.500z" fill="#e8b820" stroke="#6a5a20" stroke-width=".8"/></svg><div class="t" style="left:84px;top:47px;font-size:15.45px;letter-spacing:0.189px;">Stochastic</div><div class="a" style="left:42px;top:79px;width:14px;height:1px;background:repeating-linear-gradient(90deg,#9a9a9a 0 1px,transparent 1px 2px)"></div><svg class="a" style="left:57px;top:69px" width="20" height="19" viewBox="0 0 20 19"><rect x=".7" y=".7" width="16" height="16" rx="3" fill="#f5d04a" stroke="#b08a18" stroke-width="1.200"/><path d="M11 4c-2.500-.5-3 1-3.300 3.500L7 13M5.500 8h5" stroke="#6a5208" stroke-width="1.300" fill="none"/><path d="M15 11l3.500 3.500L15 18l-3.500-3.500z" fill="#e8b820" stroke="#6a5a20" stroke-width=".8"/></svg><div class="t" style="left:84px;top:69px;font-size:15.45px;letter-spacing:0.279px;">ZigZag</div><div class="a" style="left:42px;top:101px;width:14px;height:1px;background:repeating-linear-gradient(90deg,#9a9a9a 0 1px,transparent 1px 2px)"></div><svg class="a" style="left:57px;top:91px" width="20" height="19" viewBox="0 0 20 19"><rect x=".7" y=".7" width="16" height="16" rx="3" fill="#f5d04a" stroke="#b08a18" stroke-width="1.200"/><path d="M11 4c-2.500-.5-3 1-3.300 3.500L7 13M5.500 8h5" stroke="#6a5208" stroke-width="1.300" fill="none"/><path d="M15 11l3.500 3.500L15 18l-3.500-3.500z" fill="#9a9a9a" stroke="#6a5a20" stroke-width=".8"/></svg><div class="t" style="left:84px;top:91px;font-size:15.45px;letter-spacing:-0.169px;">迈汇数据(MyfxData.cn)_交易统计分析</div><div class="a" style="left:10px;top:117px;width:11px;height:11px;border:1px solid #919191;border-radius:2px;background:linear-gradient(135deg,#fff,#dcdcdc)"></div><div class="a" style="left:12px;top:122px;width:7px;height:1px;background:#2a4ab0"></div><div class="a" style="left:21px;top:123px;width:8px;height:1px;background:repeating-linear-gradient(90deg,#9a9a9a 0 1px,transparent 1px 2px)"></div><svg class="a" style="left:30px;top:111px" width="24" height="21" viewBox="0 0 24 21"><circle cx="10.500" cy="13" r="4" fill="#f6c63a" stroke="#b8860b" stroke-width=".8"/><ellipse cx="11" cy="7.500" rx="10" ry="3.800" fill="#3f95dd" stroke="#2a68b0"/><path d="M5.500 7a5.500 5.500 0 0 1 11 0z" fill="#7cc0f4" stroke="#2a68b0"/><path d="M17 11.500l4 4-3.500 3.500-4-4z" fill="#f4d040" stroke="#8a6a10" stroke-width=".8"/></svg><div class="t" style="left:58px;top:113px;font-size:15.45px;letter-spacing:-0.846px;">EA交易</div><div class="a" style="left:41px;top:133px;width:1px;height:35px;background:repeating-linear-gradient(#9a9a9a 0 1px,transparent 1px 2px)"></div><div class="a" style="left:42px;top:145px;width:14px;height:1px;background:repeating-linear-gradient(90deg,#9a9a9a 0 1px,transparent 1px 2px)"></div><svg class="a" style="left:56px;top:133px" width="24" height="21" viewBox="0 0 24 21"><circle cx="10.500" cy="13" r="4" fill="#f6c63a" stroke="#b8860b" stroke-width=".8"/><ellipse cx="11" cy="7.500" rx="10" ry="3.800" fill="#3f95dd" stroke="#2a68b0"/><path d="M5.500 7a5.500 5.500 0 0 1 11 0z" fill="#7cc0f4" stroke="#2a68b0"/><path d="M17 11.500l4 4-3.500 3.500-4-4z" fill="#f4d040" stroke="#8a6a10" stroke-width=".8"/></svg><div class="t" style="left:84px;top:135px;font-size:15.45px;letter-spacing:0.104px;">MACD Sample</div><div class="a" style="left:42px;top:167px;width:14px;height:1px;background:repeating-linear-gradient(90deg,#9a9a9a 0 1px,transparent 1px 2px)"></div><svg class="a" style="left:56px;top:155px" width="24" height="21" viewBox="0 0 24 21"><circle cx="10.500" cy="13" r="4" fill="#f6c63a" stroke="#b8860b" stroke-width=".8"/><ellipse cx="11" cy="7.500" rx="10" ry="3.800" fill="#3f95dd" stroke="#2a68b0"/><path d="M5.500 7a5.500 5.500 0 0 1 11 0z" fill="#7cc0f4" stroke="#2a68b0"/><path d="M17 11.500l4 4-3.500 3.500-4-4z" fill="#f4d040" stroke="#8a6a10" stroke-width=".8"/></svg><div class="t" style="left:84px;top:157px;font-size:15.45px;letter-spacing:0.595px;">Moving Average</div><div class="a" style="left:10px;top:183px;width:11px;height:11px;border:1px solid #919191;border-radius:2px;background:linear-gradient(135deg,#fff,#dcdcdc)"></div><div class="a" style="left:12px;top:188px;width:7px;height:1px;background:#2a4ab0"></div><div class="a" style="left:21px;top:189px;width:8px;height:1px;background:repeating-linear-gradient(90deg,#9a9a9a 0 1px,transparent 1px 2px)"></div><svg class="a" style="left:30px;top:178px" width="22" height="20" viewBox="0 0 22 20"><path d="M2 1.500h13v3h-2v10H5v-10H2z" fill="#f4d458" stroke="#b08a18"/><path d="M5 14.500h9v2.500H3.500z" fill="#f9e48a" stroke="#b08a18" stroke-width=".8"/><path d="M7 6h4M7 9h4" stroke="#b08a18" stroke-width=".9"/><path d="M16 11l3.500 3.500L16 18l-3.500-3.500z" fill="#f0c030" stroke="#8a6a10" stroke-width=".8"/></svg><div class="t" style="left:58px;top:179px;font-size:15.45px;letter-spacing:-0.45px;">脚本</div><div class="a" style="left:41px;top:199px;width:1px;height:70px;background:repeating-linear-gradient(#9a9a9a 0 1px,transparent 1px 2px)"></div><div class="a" style="left:36px;top:205px;width:11px;height:11px;border:1px solid #919191;border-radius:2px;background:linear-gradient(135deg,#fff,#dcdcdc)"></div><div class="a" style="left:38px;top:210px;width:7px;height:1px;background:#2a4ab0"></div><div class="a" style="left:47px;top:211px;width:8px;height:1px;background:repeating-linear-gradient(90deg,#9a9a9a 0 1px,transparent 1px 2px)"></div><svg class="a" style="left:56px;top:200px" width="22" height="20" viewBox="0 0 22 20"><path d="M2 1.500h13v3h-2v10H5v-10H2z" fill="#f4d458" stroke="#b08a18"/><path d="M5 14.500h9v2.500H3.500z" fill="#f9e48a" stroke="#b08a18" stroke-width=".8"/><path d="M7 6h4M7 9h4" stroke="#b08a18" stroke-width=".9"/><path d="M16 11l3.500 3.500L16 18l-3.500-3.500z" fill="#f0c030" stroke="#8a6a10" stroke-width=".8"/></svg><div class="t" style="left:84px;top:201px;font-size:15.45px;letter-spacing:-0.048px;">Examples</div><div class="a" style="left:67px;top:221px;width:1px;height:40px;background:repeating-linear-gradient(#9a9a9a 0 1px,transparent 1px 2px)"></div><div class="a" style="left:62px;top:227px;width:11px;height:11px;border:1px solid #919191;border-radius:2px;background:linear-gradient(135deg,#fff,#dcdcdc)"></div><div class="a" style="left:64px;top:232px;width:7px;height:1px;background:#2a4ab0"></div><div class="a" style="left:67px;top:229px;width:1px;height:7px;background:#2a4ab0"></div><div class="a" style="left:73px;top:233px;width:8px;height:1px;background:repeating-linear-gradient(90deg,#9a9a9a 0 1px,transparent 1px 2px)"></div><svg class="a" style="left:82px;top:222px" width="22" height="20" viewBox="0 0 22 20"><path d="M2 1.500h13v3h-2v10H5v-10H2z" fill="#f4d458" stroke="#b08a18"/><path d="M5 14.500h9v2.500H3.500z" fill="#f9e48a" stroke="#b08a18" stroke-width=".8"/><path d="M7 6h4M7 9h4" stroke="#b08a18" stroke-width=".9"/><path d="M16 11l3.500 3.500L16 18l-3.500-3.500z" fill="#f0c030" stroke="#8a6a10" stroke-width=".8"/></svg><div class="t" style="left:110px;top:223px;font-size:15.45px;letter-spacing:-0.829px;">DLL</div><div class="a" style="left:62px;top:249px;width:11px;height:11px;border:1px solid #919191;border-radius:2px;background:linear-gradient(135deg,#fff,#dcdcdc)"></div><div class="a" style="left:64px;top:254px;width:7px;height:1px;background:#2a4ab0"></div><div class="a" style="left:67px;top:251px;width:1px;height:7px;background:#2a4ab0"></div><div class="a" style="left:73px;top:255px;width:8px;height:1px;background:repeating-linear-gradient(90deg,#9a9a9a 0 1px,transparent 1px 2px)"></div><svg class="a" style="left:82px;top:244px" width="22" height="20" viewBox="0 0 22 20"><path d="M2 1.500h13v3h-2v10H5v-10H2z" fill="#f4d458" stroke="#b08a18"/><path d="M5 14.500h9v2.500H3.500z" fill="#f9e48a" stroke="#b08a18" stroke-width=".8"/><path d="M7 6h4M7 9h4" stroke="#b08a18" stroke-width=".9"/><path d="M16 11l3.500 3.500L16 18l-3.500-3.500z" fill="#f0c030" stroke="#8a6a10" stroke-width=".8"/></svg><div class="t" style="left:110px;top:245px;font-size:15.45px;letter-spacing:-0.1px;">Pipes</div></div><div class="a" style="left:5px;top:761px;width:341px;height:1px;background:#000"></div><div class="a" style="left:5px;top:762px;width:341px;height:26px;background:#f0f0f0"></div><div class="a" style="left:8px;top:761px;width:55px;height:25px;background:#fff;border:1px solid #000;border-top:0;box-shadow:1px 1px 0 #666"></div><div class="t" style="left:21px;top:764px;font-size:15.45px;letter-spacing:-0.45px;">常用</div><div class="t" style="left:76px;top:764px;font-size:15.45px;letter-spacing:-0.45px;color:#7a7a7a">收藏夹</div><div class="a" style="left:133px;top:765px;width:1px;height:18px;background:#6a6a6a"></div><div class="a" style="left:0px;top:788px;width:348px;height:1px;background:#fff"></div><div class="a" style="left:347px;top:123px;width:1px;height:666px;background:#fff"></div><div class="a" style="left:0px;top:793px;width:354px;height:1px;background:#b8b8b8"></div><div class="a" style="left:352px;top:123px;width:1566px;height:1px;background:#4a4a4a"></div><div class="a" style="left:354px;top:124px;width:1564px;height:643px;background:#000"></div><div class="a" style="left:352px;top:124px;width:2px;height:643px;background:linear-gradient(90deg,#b0b0b0,#5a5a5a)"></div><div class="a" style="left:352px;top:767px;width:1566px;height:2px;background:#fff"></div><div class="a" style="left:356px;top:126px;width:1499px;height:618px;border:1px solid #fff"></div><div class="a" style="left:357px;top:527px;width:2px;height:13px;background:#00ff00"></div><div class="a" style="left:356px;top:640px;width:2px;height:2px;background:#fff"></div><div class="a" style="left:356px;top:660px;width:2px;height:2px;background:#fff"></div><div class="a" style="left:1547px;top:127px;border-left:6px solid transparent;border-right:6px solid transparent;border-top:6px solid #8a97a8"></div><div class="a" style="left:1855px;top:135px;width:3px;height:1px;background:#fff"></div><div class="t" style="left:1862px;top:126px;font-size:12.48px;letter-spacing:-0.087px;color:#fff">148.850</div><div class="a" style="left:1855px;top:184px;width:3px;height:1px;background:#fff"></div><div class="t" style="left:1862px;top:175px;font-size:12.48px;letter-spacing:-0.087px;color:#fff">148.660</div><div class="a" style="left:1855px;top:233px;width:3px;height:1px;background:#fff"></div><div class="t" style="left:1862px;top:224px;font-size:12.48px;letter-spacing:-0.087px;color:#fff">148.470</div><div class="a" style="left:1855px;top:283px;width:3px;height:1px;background:#fff"></div><div class="t" style="left:1862px;top:273px;font-size:12.48px;letter-spacing:-0.087px;color:#fff">148.280</div><div class="a" style="left:1855px;top:332px;width:3px;height:1px;background:#fff"></div><div class="t" style="left:1862px;top:322px;font-size:12.48px;letter-spacing:-0.087px;color:#fff">148.090</div><div class="a" style="left:1855px;top:381px;width:3px;height:1px;background:#fff"></div><div class="t" style="left:1862px;top:371px;font-size:12.48px;letter-spacing:-0.087px;color:#fff">147.900</div><div class="a" style="left:1855px;top:430px;width:3px;height:1px;background:#fff"></div><div class="t" style="left:1862px;top:421px;font-size:12.48px;letter-spacing:-0.087px;color:#fff">147.710</div><div class="a" style="left:1855px;top:479px;width:3px;height:1px;background:#fff"></div><div class="t" style="left:1862px;top:470px;font-size:12.48px;letter-spacing:-0.087px;color:#fff">147.520</div><div class="a" style="left:1855px;top:528px;width:3px;height:1px;background:#fff"></div><div class="t" style="left:1862px;top:519px;font-size:12.48px;letter-spacing:-0.087px;color:#fff">147.330</div><div class="a" style="left:1855px;top:578px;width:3px;height:1px;background:#fff"></div><div class="t" style="left:1862px;top:568px;font-size:12.48px;letter-spacing:-0.087px;color:#fff">147.140</div><div class="a" style="left:1855px;top:627px;width:3px;height:1px;background:#fff"></div><div class="t" style="left:1862px;top:617px;font-size:12.48px;letter-spacing:-0.087px;color:#fff">146.950</div><div class="a" style="left:1855px;top:676px;width:3px;height:1px;background:#fff"></div><div class="t" style="left:1862px;top:666px;font-size:12.48px;letter-spacing:-0.087px;color:#fff">146.760</div><div class="a" style="left:1855px;top:725px;width:3px;height:1px;background:#fff"></div><div class="t" style="left:1862px;top:716px;font-size:12.48px;letter-spacing:-0.087px;color:#fff">146.570</div><div class="a" style="left:1856px;top:635px;width:55px;height:17px;background:#fff"></div><div class="t" style="left:1862px;top:634px;font-size:12.48px;letter-spacing:-0.087px;color:#000">146.886</div><div class="t" style="left:356px;top:745px;font-size:12.48px;letter-spacing:0.223px;color:#fff">20 Aug 2025</div><div class="a" style="left:453px;top:744px;width:1px;height:3px;background:#fff"></div><div class="t" style="left:452px;top:745px;font-size:12.48px;letter-spacing:0.15px;color:#fff">20 Aug 20:45</div><div class="a" style="left:549px;top:744px;width:1px;height:3px;background:#fff"></div><div class="t" style="left:548px;top:745px;font-size:12.48px;letter-spacing:0.15px;color:#fff">21 Aug 00:45</div><div class="a" style="left:645px;top:744px;width:1px;height:3px;background:#fff"></div><div class="t" style="left:644px;top:745px;font-size:12.48px;letter-spacing:0.15px;color:#fff">21 Aug 04:45</div><div class="a" style="left:741px;top:744px;width:1px;height:3px;background:#fff"></div><div class="t" style="left:740px;top:745px;font-size:12.48px;letter-spacing:0.15px;color:#fff">21 Aug 08:45</div><div class="a" style="left:837px;top:744px;width:1px;height:3px;background:#fff"></div><div class="t" style="left:836px;top:745px;font-size:12.48px;letter-spacing:0.15px;color:#fff">21 Aug 12:45</div><div class="a" style="left:933px;top:744px;width:1px;height:3px;background:#fff"></div><div class="t" style="left:932px;top:745px;font-size:12.48px;letter-spacing:0.15px;color:#fff">21 Aug 16:45</div><div class="a" style="left:1029px;top:744px;width:1px;height:3px;background:#fff"></div><div class="t" style="left:1028px;top:745px;font-size:12.48px;letter-spacing:0.15px;color:#fff">21 Aug 20:45</div><div class="a" style="left:1125px;top:744px;width:1px;height:3px;background:#fff"></div><div class="t" style="left:1124px;top:745px;font-size:12.48px;letter-spacing:0.15px;color:#fff">22 Aug 00:45</div><div class="a" style="left:1221px;top:744px;width:1px;height:3px;background:#fff"></div><div class="t" style="left:1220px;top:745px;font-size:12.48px;letter-spacing:0.15px;color:#fff">22 Aug 04:45</div><div class="a" style="left:1317px;top:744px;width:1px;height:3px;background:#fff"></div><div class="t" style="left:1316px;top:745px;font-size:12.48px;letter-spacing:0.15px;color:#fff">22 Aug 08:45</div><div class="a" style="left:1413px;top:744px;width:1px;height:3px;background:#fff"></div><div class="t" style="left:1412px;top:745px;font-size:12.48px;letter-spacing:0.15px;color:#fff">22 Aug 12:45</div><div class="a" style="left:1509px;top:744px;width:1px;height:3px;background:#fff"></div><div class="t" style="left:1508px;top:745px;font-size:12.48px;letter-spacing:0.15px;color:#fff">22 Aug 16:45</div><div class="a" style="left:1605px;top:744px;width:1px;height:3px;background:#fff"></div><div class="t" style="left:1604px;top:745px;font-size:12.48px;letter-spacing:0.15px;color:#fff">22 Aug 20:45</div><div class="a" style="left:367px;top:143px;width:780px;height:30px;border:2px solid #228b22;background:#000"></div><div class="a" style="left:367px;top:177px;width:780px;height:505px;border:2px solid #228b22;background:#000"></div><div class="a" style="left:376px;top:147px;width:23px;height:22px;background:#ffff00;border-radius:4px;border-right:1px solid #2a50c0;border-bottom:1px solid #2a50c0;color:#000;text-align:center;font-weight:bold"><div class="a" style="left:0;top:1px;width:22px;font-size:11px;line-height:11px;letter-spacing:.5px;transform:scaleX(1.25)">FX</div><div class="a" style="left:0;top:11px;width:22px;font-size:7px;line-height:9px;letter-spacing:0">DATA</div></div><div class="t" style="left:405px;top:149px;font-size:17px;letter-spacing:0.0px;color:#f2f2f2">迈汇数据</div><div class="t" style="left:477px;top:148px;font-size:17px;letter-spacing:0.583px;color:#f2f2f2">|</div><div class="t" style="left:488.5px;top:149px;font-size:17px;letter-spacing:0.476px;color:#f2f2f2">MyfxData.cn</div><div class="t" style="left:599px;top:149px;font-size:17px;letter-spacing:0.0px;color:#f2f2f2">统计分析每一笔交易</div><div class="t" style="left:738px;top:149px;font-size:17px;letter-spacing:-0.2px;color:#f2f2f2">平台时间：</div><div class="t" style="left:822px;top:149px;font-size:17.34px;letter-spacing:0.243px;color:#f2f2f2">2025.08.22 23:59:59</div><div class="t" style="left:944px;top:149px;font-size:17.34px;letter-spacing:0.612px;color:#00ffff">收盘倒计时_M5&gt;0:1</div><div class="a" style="left:1117px;top:149px;width:22px;height:19px;border:1px solid #228b22;background:#000"></div><div class="a" style="left:1123px;top:157px;width:10px;height:3px;background:#fff"></div><div class="a" style="left:387px;top:193px;width:68px;height:24px;border:1px solid #228b22;border-radius:3px;background:#000"></div><div class="t" style="left:391px;top:195px;font-size:15px;letter-spacing:0.0px;color:#fff">全局统计</div><div class="a" style="left:467px;top:193px;width:68px;height:24px;border:1px solid #228b22;border-radius:3px;background:#1c7c1c"></div><div class="t" style="left:471px;top:195px;font-size:15px;letter-spacing:0.0px;color:#fff">按日统计</div><div class="a" style="left:547px;top:193px;width:68px;height:24px;border:1px solid #228b22;border-radius:3px;background:#000"></div><div class="t" style="left:551px;top:195px;font-size:15px;letter-spacing:0.0px;color:#fff">按周统计</div><div class="a" style="left:627px;top:193px;width:68px;height:24px;border:1px solid #228b22;border-radius:3px;background:#000"></div><div class="t" style="left:631px;top:195px;font-size:15px;letter-spacing:0.0px;color:#fff">按月统计</div><div class="a" style="left:707px;top:193px;width:68px;height:24px;border:1px solid #228b22;border-radius:3px;background:#000"></div><div class="t" style="left:711px;top:195px;font-size:15px;letter-spacing:0.0px;color:#fff">按年统计</div><div class="a" style="left:787px;top:193px;width:68px;height:24px;border:1px solid #228b22;border-radius:3px;background:#1c7c1c"></div><div class="t" style="left:791px;top:195px;font-size:15px;letter-spacing:0.0px;color:#fff">专业数据</div><div class="a" style="left:867px;top:193px;width:68px;height:24px;border:1px solid #228b22;border-radius:3px;background:#000"></div><div class="t" style="left:871px;top:195px;font-size:15px;letter-spacing:0.0px;color:#fff">交易轨迹</div><div class="a" style="left:800px;top:176px;width:22px;height:12px;background:#f0901e;border-radius:3px;color:#fff;font-size:7.500px;line-height:12px;text-align:center;font-weight:bold;letter-spacing:.3px">HOT</div><div class="a" style="left:806px;top:187px;border-left:3px solid #f0901e;border-right:3px solid transparent;border-bottom:4px solid transparent"></div><div class="t" style="left:952px;top:182px;font-size:13px;letter-spacing:-0.132px;color:#e6e6e6">帐户货币:USD</div><div class="t" style="left:1042px;top:182px;font-size:13px;letter-spacing:0.171px;color:#e6e6e6">暴仓比例:50%</div><div class="t" style="left:952px;top:200px;font-size:13px;letter-spacing:-0.04px;color:#e6e6e6">浮亏警报-OFF</div><div class="t" style="left:1042px;top:200px;font-size:13px;letter-spacing:0.085px;color:#e6e6e6">报告推送-OFF</div><div class="a" style="left:369px;top:219px;width:776px;height:2px;background:#228b22"></div><div class="t" style="left:392px;top:225px;font-size:13px;letter-spacing:0.226px;color:#ececec">日 期</div><div class="t" style="left:455px;top:225px;font-size:13px;letter-spacing:0.226px;color:#ececec">单 量</div><div class="t" style="left:525px;top:225px;font-size:13px;letter-spacing:0.226px;color:#ececec">手 数</div><div class="t" style="left:598px;top:225px;font-size:13px;letter-spacing:0.226px;color:#ececec">盈 亏</div><div class="t" style="left:666px;top:225px;font-size:13px;letter-spacing:0.226px;color:#ececec">返 佣</div><div class="t" style="left:732px;top:225px;font-size:13px;letter-spacing:0.0px;color:#ececec">返佣差</div><div class="t" style="left:815px;top:225px;font-size:13px;letter-spacing:0.0px;color:#ececec">盈利率</div><div class="t" style="left:887px;top:225px;font-size:13px;letter-spacing:0.0px;color:#ececec">最大回撤</div><div class="t" style="left:961px;top:225px;font-size:13px;letter-spacing:0.0px;color:#ececec">最大浮亏</div><div class="t" style="left:1047px;top:225px;font-size:13px;letter-spacing:0.226px;color:#ececec">余 额</div><div class="a" style="left:369px;top:245px;width:776px;height:403px;background:#252733"></div><div class="a" style="left:369px;top:648px;width:776px;height:2px;background:#228b22"></div><div class="a" style="left:369px;top:650px;width:776px;height:30px;background:#252733"></div><div class="t" style="left:392.5px;top:248px;font-size:15.45px;letter-spacing:0.128px;color:#ff4500">08.19</div><div class="t" style="left:462.5px;top:248px;font-size:15.45px;letter-spacing:0.258px;color:#ff4500">16</div><div class="t" style="left:525.5px;top:248px;font-size:15.45px;letter-spacing:0.096px;color:#ff4500">0.65</div><div class="t" style="left:597.5px;top:248px;font-size:15.45px;letter-spacing:0.15px;color:#ff4500">249.35</div><div class="t" style="left:665.5px;top:248px;font-size:15.45px;letter-spacing:0.096px;color:#ff4500">6.50</div><div class="t" style="left:735.5px;top:248px;font-size:15.45px;letter-spacing:0.15px;color:#ff4500">255.85</div><div class="t" style="left:817.5px;top:248px;font-size:15.45px;letter-spacing:-0.033px;color:#ff4500">24.94%</div><div class="t" style="left:893px;top:248px;font-size:15.45px;letter-spacing:0.073px;color:#ff4500">-14.47%</div><div class="t" style="left:968px;top:248px;font-size:15.45px;letter-spacing:0.229px;color:#ff4500">-283.84</div><div class="t" style="left:1046px;top:248px;font-size:15.45px;letter-spacing:0.165px;color:#ff4500">2210.70</div><div class="t" style="left:392.5px;top:266px;font-size:15.45px;letter-spacing:0.128px;color:#ff4500">08.18</div><div class="t" style="left:462.5px;top:266px;font-size:15.45px;letter-spacing:0.258px;color:#ff4500">14</div><div class="t" style="left:525.5px;top:266px;font-size:15.45px;letter-spacing:0.096px;color:#ff4500">1.16</div><div class="t" style="left:597.5px;top:266px;font-size:15.45px;letter-spacing:0.15px;color:#ff4500">195.46</div><div class="t" style="left:665.5px;top:266px;font-size:15.45px;letter-spacing:0.358px;color:#ff4500">11.60</div><div class="t" style="left:735.5px;top:266px;font-size:15.45px;letter-spacing:0.15px;color:#ff4500">207.06</div><div class="t" style="left:817.5px;top:266px;font-size:15.45px;letter-spacing:-0.033px;color:#ff4500">19.55%</div><div class="t" style="left:893px;top:266px;font-size:15.45px;letter-spacing:0.073px;color:#ff4500">-19.43%</div><div class="t" style="left:968px;top:266px;font-size:15.45px;letter-spacing:0.229px;color:#ff4500">-343.18</div><div class="t" style="left:1046px;top:266px;font-size:15.45px;letter-spacing:0.165px;color:#ff4500">1961.35</div><div class="t" style="left:392.5px;top:284px;font-size:15.45px;letter-spacing:0.128px;color:#737373">08.15</div><div class="t" style="left:462.5px;top:284px;font-size:15.45px;letter-spacing:0.258px;color:#737373">0</div><div class="t" style="left:525.5px;top:284px;font-size:15.45px;letter-spacing:0.096px;color:#737373">0.00</div><div class="t" style="left:597.5px;top:284px;font-size:15.45px;letter-spacing:0.096px;color:#737373">0.00</div><div class="t" style="left:665.5px;top:284px;font-size:15.45px;letter-spacing:0.096px;color:#737373">0.00</div><div class="t" style="left:735.5px;top:284px;font-size:15.45px;letter-spacing:0.096px;color:#737373">0.00</div><div class="t" style="left:817.5px;top:284px;font-size:15.45px;letter-spacing:-0.091px;color:#737373">0.00%</div><div class="t" style="left:893px;top:284px;font-size:15.45px;letter-spacing:-0.091px;color:#737373">0.00%</div><div class="t" style="left:968px;top:284px;font-size:15.45px;letter-spacing:0.096px;color:#737373">0.00</div><div class="t" style="left:1046px;top:284px;font-size:15.45px;letter-spacing:0.165px;color:#737373">1765.89</div><div class="t" style="left:392.5px;top:302px;font-size:15.45px;letter-spacing:0.128px;color:#ff4500">08.14</div><div class="t" style="left:462.5px;top:302px;font-size:15.45px;letter-spacing:0.258px;color:#ff4500">5</div><div class="t" style="left:525.5px;top:302px;font-size:15.45px;letter-spacing:0.096px;color:#ff4500">0.22</div><div class="t" style="left:597.5px;top:302px;font-size:15.45px;letter-spacing:0.15px;color:#ff4500">100.21</div><div class="t" style="left:665.5px;top:302px;font-size:15.45px;letter-spacing:0.096px;color:#ff4500">2.20</div><div class="t" style="left:735.5px;top:302px;font-size:15.45px;letter-spacing:0.15px;color:#ff4500">102.41</div><div class="t" style="left:817.5px;top:302px;font-size:15.45px;letter-spacing:-0.033px;color:#ff4500">10.02%</div><div class="t" style="left:893px;top:302px;font-size:15.45px;letter-spacing:0.073px;color:#ff4500">-13.49%</div><div class="t" style="left:968px;top:302px;font-size:15.45px;letter-spacing:0.229px;color:#ff4500">-232.80</div><div class="t" style="left:1046px;top:302px;font-size:15.45px;letter-spacing:0.165px;color:#ff4500">1765.89</div><div class="t" style="left:392.5px;top:320px;font-size:15.45px;letter-spacing:0.128px;color:#737373">08.13</div><div class="t" style="left:462.5px;top:320px;font-size:15.45px;letter-spacing:0.258px;color:#737373">0</div><div class="t" style="left:525.5px;top:320px;font-size:15.45px;letter-spacing:0.096px;color:#737373">0.00</div><div class="t" style="left:597.5px;top:320px;font-size:15.45px;letter-spacing:0.096px;color:#737373">0.00</div><div class="t" style="left:665.5px;top:320px;font-size:15.45px;letter-spacing:0.096px;color:#737373">0.00</div><div class="t" style="left:735.5px;top:320px;font-size:15.45px;letter-spacing:0.096px;color:#737373">0.00</div><div class="t" style="left:817.5px;top:320px;font-size:15.45px;letter-spacing:-0.091px;color:#737373">0.00%</div><div class="t" style="left:893px;top:320px;font-size:15.45px;letter-spacing:0.073px;color:#737373">-13.32%</div><div class="t" style="left:968px;top:320px;font-size:15.45px;letter-spacing:0.229px;color:#737373">-221.89</div><div class="t" style="left:1046px;top:320px;font-size:15.45px;letter-spacing:0.165px;color:#737373">1665.68</div><div class="t" style="left:392.5px;top:338px;font-size:15.45px;letter-spacing:0.128px;color:#ff4500">08.12</div><div class="t" style="left:462.5px;top:338px;font-size:15.45px;letter-spacing:0.258px;color:#ff4500">10</div><div class="t" style="left:525.5px;top:338px;font-size:15.45px;letter-spacing:0.096px;color:#ff4500">0.35</div><div class="t" style="left:597.5px;top:338px;font-size:15.45px;letter-spacing:0.128px;color:#ff4500">12.57</div><div class="t" style="left:665.5px;top:338px;font-size:15.45px;letter-spacing:0.096px;color:#ff4500">3.50</div><div class="t" style="left:735.5px;top:338px;font-size:15.45px;letter-spacing:0.128px;color:#ff4500">16.07</div><div class="t" style="left:817.5px;top:338px;font-size:15.45px;letter-spacing:-0.091px;color:#ff4500">1.26%</div><div class="t" style="left:893px;top:338px;font-size:15.45px;letter-spacing:0.042px;color:#ff4500">-0.76%</div><div class="t" style="left:968px;top:338px;font-size:15.45px;letter-spacing:0.224px;color:#ff4500">-12.59</div><div class="t" style="left:1046px;top:338px;font-size:15.45px;letter-spacing:0.165px;color:#ff4500">1665.68</div><div class="t" style="left:392.5px;top:356px;font-size:15.45px;letter-spacing:0.358px;color:#737373">08.11</div><div class="t" style="left:462.5px;top:356px;font-size:15.45px;letter-spacing:0.258px;color:#737373">0</div><div class="t" style="left:525.5px;top:356px;font-size:15.45px;letter-spacing:0.096px;color:#737373">0.00</div><div class="t" style="left:597.5px;top:356px;font-size:15.45px;letter-spacing:0.096px;color:#737373">0.00</div><div class="t" style="left:665.5px;top:356px;font-size:15.45px;letter-spacing:0.096px;color:#737373">0.00</div><div class="t" style="left:735.5px;top:356px;font-size:15.45px;letter-spacing:0.096px;color:#737373">0.00</div><div class="t" style="left:817.5px;top:356px;font-size:15.45px;letter-spacing:-0.091px;color:#737373">0.00%</div><div class="t" style="left:893px;top:356px;font-size:15.45px;letter-spacing:-0.091px;color:#737373">0.00%</div><div class="t" style="left:968px;top:356px;font-size:15.45px;letter-spacing:0.096px;color:#737373">0.00</div><div class="t" style="left:1046px;top:356px;font-size:15.45px;letter-spacing:0.329px;color:#737373">1653.11</div><div class="t" style="left:392.5px;top:374px;font-size:15.45px;letter-spacing:0.128px;color:#ff4500">08.08</div><div class="t" style="left:462.5px;top:374px;font-size:15.45px;letter-spacing:0.258px;color:#ff4500">2</div><div class="t" style="left:525.5px;top:374px;font-size:15.45px;letter-spacing:0.096px;color:#ff4500">0.07</div><div class="t" style="left:597.5px;top:374px;font-size:15.45px;letter-spacing:0.128px;color:#ff4500">19.17</div><div class="t" style="left:665.5px;top:374px;font-size:15.45px;letter-spacing:0.096px;color:#ff4500">0.70</div><div class="t" style="left:735.5px;top:374px;font-size:15.45px;letter-spacing:0.128px;color:#ff4500">19.87</div><div class="t" style="left:817.5px;top:374px;font-size:15.45px;letter-spacing:-0.091px;color:#ff4500">1.92%</div><div class="t" style="left:893px;top:374px;font-size:15.45px;letter-spacing:0.073px;color:#ff4500">-12.34%</div><div class="t" style="left:968px;top:374px;font-size:15.45px;letter-spacing:0.229px;color:#ff4500">-205.50</div><div class="t" style="left:1046px;top:374px;font-size:15.45px;letter-spacing:0.329px;color:#ff4500">1653.11</div><div class="t" style="left:392.5px;top:392px;font-size:15.45px;letter-spacing:0.128px;color:#ff4500">08.07</div><div class="t" style="left:462.5px;top:392px;font-size:15.45px;letter-spacing:0.258px;color:#ff4500">7</div><div class="t" style="left:525.5px;top:392px;font-size:15.45px;letter-spacing:0.096px;color:#ff4500">0.29</div><div class="t" style="left:597.5px;top:392px;font-size:15.45px;letter-spacing:0.128px;color:#ff4500">63.85</div><div class="t" style="left:665.5px;top:392px;font-size:15.45px;letter-spacing:0.096px;color:#ff4500">2.90</div><div class="t" style="left:735.5px;top:392px;font-size:15.45px;letter-spacing:0.128px;color:#ff4500">66.75</div><div class="t" style="left:817.5px;top:392px;font-size:15.45px;letter-spacing:-0.091px;color:#ff4500">6.39%</div><div class="t" style="left:893px;top:392px;font-size:15.45px;letter-spacing:-0.091px;color:#ff4500">0.00%</div><div class="t" style="left:968px;top:392px;font-size:15.45px;letter-spacing:0.096px;color:#ff4500">0.00</div><div class="t" style="left:1046px;top:392px;font-size:15.45px;letter-spacing:0.165px;color:#ff4500">1833.94</div><div class="t" style="left:392.5px;top:410px;font-size:15.45px;letter-spacing:0.128px;color:#ff4500">08.06</div><div class="t" style="left:462.5px;top:410px;font-size:15.45px;letter-spacing:0.258px;color:#ff4500">2</div><div class="t" style="left:525.5px;top:410px;font-size:15.45px;letter-spacing:0.096px;color:#ff4500">0.07</div><div class="t" style="left:597.5px;top:410px;font-size:15.45px;letter-spacing:0.096px;color:#ff4500">9.93</div><div class="t" style="left:665.5px;top:410px;font-size:15.45px;letter-spacing:0.096px;color:#ff4500">0.70</div><div class="t" style="left:735.5px;top:410px;font-size:15.45px;letter-spacing:0.128px;color:#ff4500">10.63</div><div class="t" style="left:817.5px;top:410px;font-size:15.45px;letter-spacing:-0.091px;color:#ff4500">0.99%</div><div class="t" style="left:893px;top:410px;font-size:15.45px;letter-spacing:-0.091px;color:#ff4500">0.00%</div><div class="t" style="left:968px;top:410px;font-size:15.45px;letter-spacing:0.096px;color:#ff4500">0.00</div><div class="t" style="left:1046px;top:410px;font-size:15.45px;letter-spacing:0.165px;color:#ff4500">1770.09</div><div class="t" style="left:392.5px;top:428px;font-size:15.45px;letter-spacing:0.128px;color:#ff4500">08.05</div><div class="t" style="left:462.5px;top:428px;font-size:15.45px;letter-spacing:0.258px;color:#ff4500">9</div><div class="t" style="left:525.5px;top:428px;font-size:15.45px;letter-spacing:0.096px;color:#ff4500">0.53</div><div class="t" style="left:597.5px;top:428px;font-size:15.45px;letter-spacing:0.15px;color:#ff4500">170.64</div><div class="t" style="left:665.5px;top:428px;font-size:15.45px;letter-spacing:0.096px;color:#ff4500">5.30</div><div class="t" style="left:735.5px;top:428px;font-size:15.45px;letter-spacing:0.15px;color:#ff4500">175.94</div><div class="t" style="left:817.5px;top:428px;font-size:15.45px;letter-spacing:-0.033px;color:#ff4500">17.06%</div><div class="t" style="left:893px;top:428px;font-size:15.45px;letter-spacing:-0.091px;color:#ff4500">0.00%</div><div class="t" style="left:968px;top:428px;font-size:15.45px;letter-spacing:0.096px;color:#ff4500">0.00</div><div class="t" style="left:1046px;top:428px;font-size:15.45px;letter-spacing:0.165px;color:#ff4500">1760.16</div><div class="t" style="left:392.5px;top:446px;font-size:15.45px;letter-spacing:0.128px;color:#ff4500">08.04</div><div class="t" style="left:462.5px;top:446px;font-size:15.45px;letter-spacing:0.258px;color:#ff4500">5</div><div class="t" style="left:525.5px;top:446px;font-size:15.45px;letter-spacing:0.096px;color:#ff4500">0.22</div><div class="t" style="left:597.5px;top:446px;font-size:15.45px;letter-spacing:0.128px;color:#ff4500">50.52</div><div class="t" style="left:665.5px;top:446px;font-size:15.45px;letter-spacing:0.096px;color:#ff4500">2.20</div><div class="t" style="left:735.5px;top:446px;font-size:15.45px;letter-spacing:0.128px;color:#ff4500">52.72</div><div class="t" style="left:817.5px;top:446px;font-size:15.45px;letter-spacing:-0.091px;color:#ff4500">5.05%</div><div class="t" style="left:893px;top:446px;font-size:15.45px;letter-spacing:-0.091px;color:#ff4500">0.00%</div><div class="t" style="left:968px;top:446px;font-size:15.45px;letter-spacing:0.096px;color:#ff4500">0.00</div><div class="t" style="left:1046px;top:446px;font-size:15.45px;letter-spacing:0.165px;color:#ff4500">1589.52</div><div class="t" style="left:392.5px;top:464px;font-size:15.45px;letter-spacing:0.128px;color:#737373">08.01</div><div class="t" style="left:462.5px;top:464px;font-size:15.45px;letter-spacing:0.258px;color:#737373">0</div><div class="t" style="left:525.5px;top:464px;font-size:15.45px;letter-spacing:0.096px;color:#737373">0.00</div><div class="t" style="left:597.5px;top:464px;font-size:15.45px;letter-spacing:0.096px;color:#737373">0.00</div><div class="t" style="left:665.5px;top:464px;font-size:15.45px;letter-spacing:0.096px;color:#737373">0.00</div><div class="t" style="left:735.5px;top:464px;font-size:15.45px;letter-spacing:0.096px;color:#737373">0.00</div><div class="t" style="left:817.5px;top:464px;font-size:15.45px;letter-spacing:-0.091px;color:#737373">0.00%</div><div class="t" style="left:893px;top:464px;font-size:15.45px;letter-spacing:-0.091px;color:#737373">0.00%</div><div class="t" style="left:968px;top:464px;font-size:15.45px;letter-spacing:0.096px;color:#737373">0.00</div><div class="t" style="left:1046px;top:464px;font-size:15.45px;letter-spacing:0.165px;color:#737373">1539.00</div><div class="t" style="left:392.5px;top:482px;font-size:15.45px;letter-spacing:0.128px;color:#737373">07.31</div><div class="t" style="left:462.5px;top:482px;font-size:15.45px;letter-spacing:0.258px;color:#737373">0</div><div class="t" style="left:525.5px;top:482px;font-size:15.45px;letter-spacing:0.096px;color:#737373">0.00</div><div class="t" style="left:597.5px;top:482px;font-size:15.45px;letter-spacing:0.096px;color:#737373">0.00</div><div class="t" style="left:665.5px;top:482px;font-size:15.45px;letter-spacing:0.096px;color:#737373">0.00</div><div class="t" style="left:735.5px;top:482px;font-size:15.45px;letter-spacing:0.096px;color:#737373">0.00</div><div class="t" style="left:817.5px;top:482px;font-size:15.45px;letter-spacing:-0.091px;color:#737373">0.00%</div><div class="t" style="left:893px;top:482px;font-size:15.45px;letter-spacing:-0.091px;color:#737373">0.00%</div><div class="t" style="left:968px;top:482px;font-size:15.45px;letter-spacing:0.096px;color:#737373">0.00</div><div class="t" style="left:1046px;top:482px;font-size:15.45px;letter-spacing:0.165px;color:#737373">1539.00</div><div class="t" style="left:392.5px;top:500px;font-size:15.45px;letter-spacing:0.128px;color:#ff4500">07.30</div><div class="t" style="left:462.5px;top:500px;font-size:15.45px;letter-spacing:0.258px;color:#ff4500">12</div><div class="t" style="left:525.5px;top:500px;font-size:15.45px;letter-spacing:0.096px;color:#ff4500">0.42</div><div class="t" style="left:597.5px;top:500px;font-size:15.45px;letter-spacing:0.096px;color:#ff4500">9.82</div><div class="t" style="left:665.5px;top:500px;font-size:15.45px;letter-spacing:0.096px;color:#ff4500">4.20</div><div class="t" style="left:735.5px;top:500px;font-size:15.45px;letter-spacing:0.128px;color:#ff4500">14.02</div><div class="t" style="left:817.5px;top:500px;font-size:15.45px;letter-spacing:-0.091px;color:#ff4500">0.98%</div><div class="t" style="left:893px;top:500px;font-size:15.45px;letter-spacing:-0.091px;color:#ff4500">0.00%</div><div class="t" style="left:968px;top:500px;font-size:15.45px;letter-spacing:0.096px;color:#ff4500">0.00</div><div class="t" style="left:1046px;top:500px;font-size:15.45px;letter-spacing:0.165px;color:#ff4500">1539.00</div><div class="t" style="left:392.5px;top:518px;font-size:15.45px;letter-spacing:0.128px;color:#00ff00">07.29</div><div class="t" style="left:462.5px;top:518px;font-size:15.45px;letter-spacing:0.258px;color:#00ff00">4</div><div class="t" style="left:525.5px;top:518px;font-size:15.45px;letter-spacing:0.096px;color:#00ff00">0.14</div><div class="t" style="left:597.5px;top:518px;font-size:15.45px;letter-spacing:0.218px;color:#00ff00">-5.01</div><div class="t" style="left:665.5px;top:518px;font-size:15.45px;letter-spacing:0.096px;color:#00ff00">1.40</div><div class="t" style="left:735.5px;top:518px;font-size:15.45px;letter-spacing:0.218px;color:#00ff00">-3.61</div><div class="t" style="left:817.5px;top:518px;font-size:15.45px;letter-spacing:0.042px;color:#00ff00">-0.50%</div><div class="t" style="left:893px;top:518px;font-size:15.45px;letter-spacing:-0.091px;color:#00ff00">0.00%</div><div class="t" style="left:968px;top:518px;font-size:15.45px;letter-spacing:0.096px;color:#00ff00">0.00</div><div class="t" style="left:1046px;top:518px;font-size:15.45px;letter-spacing:0.165px;color:#00ff00">1529.18</div><div class="t" style="left:392.5px;top:536px;font-size:15.45px;letter-spacing:0.128px;color:#ff4500">07.28</div><div class="t" style="left:462.5px;top:536px;font-size:15.45px;letter-spacing:0.258px;color:#ff4500">3</div><div class="t" style="left:525.5px;top:536px;font-size:15.45px;letter-spacing:0.096px;color:#ff4500">0.15</div><div class="t" style="left:597.5px;top:536px;font-size:15.45px;letter-spacing:0.358px;color:#ff4500">29.11</div><div class="t" style="left:665.5px;top:536px;font-size:15.45px;letter-spacing:0.096px;color:#ff4500">1.50</div><div class="t" style="left:735.5px;top:536px;font-size:15.45px;letter-spacing:0.128px;color:#ff4500">30.61</div><div class="t" style="left:817.5px;top:536px;font-size:15.45px;letter-spacing:-0.091px;color:#ff4500">2.91%</div><div class="t" style="left:893px;top:536px;font-size:15.45px;letter-spacing:-0.091px;color:#ff4500">0.00%</div><div class="t" style="left:968px;top:536px;font-size:15.45px;letter-spacing:0.096px;color:#ff4500">0.00</div><div class="t" style="left:1046px;top:536px;font-size:15.45px;letter-spacing:0.165px;color:#ff4500">1534.19</div><div class="t" style="left:392.5px;top:554px;font-size:15.45px;letter-spacing:0.128px;color:#ff4500">07.25</div><div class="t" style="left:462.5px;top:554px;font-size:15.45px;letter-spacing:0.258px;color:#ff4500">2</div><div class="t" style="left:525.5px;top:554px;font-size:15.45px;letter-spacing:0.096px;color:#ff4500">0.07</div><div class="t" style="left:597.5px;top:554px;font-size:15.45px;letter-spacing:0.128px;color:#ff4500">41.69</div><div class="t" style="left:665.5px;top:554px;font-size:15.45px;letter-spacing:0.096px;color:#ff4500">0.70</div><div class="t" style="left:735.5px;top:554px;font-size:15.45px;letter-spacing:0.128px;color:#ff4500">42.39</div><div class="t" style="left:817.5px;top:554px;font-size:15.45px;letter-spacing:-0.091px;color:#ff4500">4.17%</div><div class="t" style="left:893px;top:554px;font-size:15.45px;letter-spacing:0.042px;color:#ff4500">-3.37%</div><div class="t" style="left:968px;top:554px;font-size:15.45px;letter-spacing:0.224px;color:#ff4500">-50.75</div><div class="t" style="left:1046px;top:554px;font-size:15.45px;letter-spacing:0.165px;color:#ff4500">1505.08</div><div class="t" style="left:392.5px;top:572px;font-size:15.45px;letter-spacing:0.128px;color:#ff4500">07.24</div><div class="t" style="left:462.5px;top:572px;font-size:15.45px;letter-spacing:0.258px;color:#ff4500">2</div><div class="t" style="left:525.5px;top:572px;font-size:15.45px;letter-spacing:0.096px;color:#ff4500">0.07</div><div class="t" style="left:597.5px;top:572px;font-size:15.45px;letter-spacing:0.128px;color:#ff4500">41.22</div><div class="t" style="left:665.5px;top:572px;font-size:15.45px;letter-spacing:0.096px;color:#ff4500">0.70</div><div class="t" style="left:735.5px;top:572px;font-size:15.45px;letter-spacing:0.128px;color:#ff4500">41.92</div><div class="t" style="left:817.5px;top:572px;font-size:15.45px;letter-spacing:-0.091px;color:#ff4500">4.12%</div><div class="t" style="left:893px;top:572px;font-size:15.45px;letter-spacing:-0.091px;color:#ff4500">0.00%</div><div class="t" style="left:968px;top:572px;font-size:15.45px;letter-spacing:0.096px;color:#ff4500">0.00</div><div class="t" style="left:1046px;top:572px;font-size:15.45px;letter-spacing:0.165px;color:#ff4500">1463.39</div><div class="t" style="left:392.5px;top:590px;font-size:15.45px;letter-spacing:0.128px;color:#737373">07.23</div><div class="t" style="left:462.5px;top:590px;font-size:15.45px;letter-spacing:0.258px;color:#737373">0</div><div class="t" style="left:525.5px;top:590px;font-size:15.45px;letter-spacing:0.096px;color:#737373">0.00</div><div class="t" style="left:597.5px;top:590px;font-size:15.45px;letter-spacing:0.096px;color:#737373">0.00</div><div class="t" style="left:665.5px;top:590px;font-size:15.45px;letter-spacing:0.096px;color:#737373">0.00</div><div class="t" style="left:735.5px;top:590px;font-size:15.45px;letter-spacing:0.096px;color:#737373">0.00</div><div class="t" style="left:817.5px;top:590px;font-size:15.45px;letter-spacing:-0.091px;color:#737373">0.00%</div><div class="t" style="left:893px;top:590px;font-size:15.45px;letter-spacing:-0.091px;color:#737373">0.00%</div><div class="t" style="left:968px;top:590px;font-size:15.45px;letter-spacing:0.096px;color:#737373">0.00</div><div class="t" style="left:1046px;top:590px;font-size:15.45px;letter-spacing:0.165px;color:#737373">1422.17</div><div class="t" style="left:392.5px;top:608px;font-size:15.45px;letter-spacing:0.128px;color:#ff4500">07.22</div><div class="t" style="left:462.5px;top:608px;font-size:15.45px;letter-spacing:0.258px;color:#ff4500">4</div><div class="t" style="left:525.5px;top:608px;font-size:15.45px;letter-spacing:0.096px;color:#ff4500">0.14</div><div class="t" style="left:597.5px;top:608px;font-size:15.45px;letter-spacing:0.128px;color:#ff4500">69.38</div><div class="t" style="left:665.5px;top:608px;font-size:15.45px;letter-spacing:0.096px;color:#ff4500">1.40</div><div class="t" style="left:735.5px;top:608px;font-size:15.45px;letter-spacing:0.128px;color:#ff4500">70.78</div><div class="t" style="left:817.5px;top:608px;font-size:15.45px;letter-spacing:-0.091px;color:#ff4500">6.94%</div><div class="t" style="left:893px;top:608px;font-size:15.45px;letter-spacing:-0.091px;color:#ff4500">0.00%</div><div class="t" style="left:968px;top:608px;font-size:15.45px;letter-spacing:0.096px;color:#ff4500">0.00</div><div class="t" style="left:1046px;top:608px;font-size:15.45px;letter-spacing:0.165px;color:#ff4500">1422.17</div><div class="t" style="left:392.5px;top:626px;font-size:15.45px;letter-spacing:0.128px;color:#737373">07.21</div><div class="t" style="left:462.5px;top:626px;font-size:15.45px;letter-spacing:0.258px;color:#737373">0</div><div class="t" style="left:525.5px;top:626px;font-size:15.45px;letter-spacing:0.096px;color:#737373">0.00</div><div class="t" style="left:597.5px;top:626px;font-size:15.45px;letter-spacing:0.096px;color:#737373">0.00</div><div class="t" style="left:665.5px;top:626px;font-size:15.45px;letter-spacing:0.096px;color:#737373">0.00</div><div class="t" style="left:735.5px;top:626px;font-size:15.45px;letter-spacing:0.096px;color:#737373">0.00</div><div class="t" style="left:817.5px;top:626px;font-size:15.45px;letter-spacing:-0.091px;color:#737373">0.00%</div><div class="t" style="left:893px;top:626px;font-size:15.45px;letter-spacing:-0.091px;color:#737373">0.00%</div><div class="t" style="left:968px;top:626px;font-size:15.45px;letter-spacing:0.096px;color:#737373">0.00</div><div class="t" style="left:1046px;top:626px;font-size:15.45px;letter-spacing:0.165px;color:#737373">1352.79</div><div class="t" style="left:385.5px;top:655px;font-size:15px;letter-spacing:0.063px;color:#ff4500">22天汇总</div><div class="t" style="left:462.5px;top:655px;font-size:15.45px;letter-spacing:0.258px;color:#ff4500">97</div><div class="t" style="left:525.5px;top:655px;font-size:15.45px;letter-spacing:0.096px;color:#ff4500">4.55</div><div class="t" style="left:597.5px;top:655px;font-size:15.45px;letter-spacing:0.165px;color:#ff4500">1057.91</div><div class="t" style="left:665.5px;top:655px;font-size:15.45px;letter-spacing:0.128px;color:#ff4500">45.50</div><div class="t" style="left:735.5px;top:655px;font-size:15.45px;letter-spacing:0.329px;color:#ff4500">1103.41</div><div class="t" style="left:817.5px;top:655px;font-size:15.45px;letter-spacing:0.009px;color:#ff4500">105.79%</div><div class="t" style="left:893px;top:655px;font-size:15.45px;letter-spacing:0.073px;color:#ff4500">-19.43%</div><div class="t" style="left:968px;top:655px;font-size:15.45px;letter-spacing:0.229px;color:#ff4500">-343.18</div><div class="t" style="left:1046px;top:655px;font-size:15.45px;letter-spacing:0.165px;color:#ff4500">2210.70</div><div class="a" style="left:1152px;top:143px;width:380px;height:28px;background:#252733"></div><div class="a" style="left:1152px;top:143px;width:380px;height:1px;background:repeating-linear-gradient(90deg,transparent 0 3px,#228b22 3px 6px);background-position:0px 0"></div><div class="a" style="left:1152px;top:170px;width:380px;height:1px;background:repeating-linear-gradient(90deg,transparent 0 3px,#228b22 3px 6px);background-position:0px 0"></div><div class="a" style="left:1152px;top:143px;width:1px;height:28px;background:repeating-linear-gradient(180deg,#228b22 0 3px,transparent 3px 6px);background-position:0 -1px"></div><div class="a" style="left:1531px;top:143px;width:1px;height:28px;background:repeating-linear-gradient(180deg,#228b22 0 3px,transparent 3px 6px);background-position:0 -1px"></div><div class="t" style="left:1167px;top:151px;font-size:15px;letter-spacing:-0.063px;color:#e6e6e6">温馨提示：在帐户历史中，右击选择&lt;所有交易记录&gt;</div><div class="a" style="left:1501px;top:147px;width:22px;height:20px;border:1px solid #228b22"></div><svg class="a" style="left:1506px;top:152px" width="11" height="11" viewBox="0 0 11 11"><path d="M1 1l9 9M10 1l-9 9" stroke="#f0f0f0" stroke-width="1.300"/></svg><div class="a" style="left:1152px;top:176px;width:380px;height:550px;background:#252733"></div><div class="a" style="left:1152px;top:176px;width:380px;height:1px;background:repeating-linear-gradient(90deg,transparent 0 3px,#228b22 3px 6px);background-position:0px 0"></div><div class="a" style="left:1152px;top:725px;width:380px;height:1px;background:repeating-linear-gradient(90deg,transparent 0 3px,#228b22 3px 6px);background-position:0px 0"></div><div class="a" style="left:1152px;top:176px;width:1px;height:550px;background:repeating-linear-gradient(180deg,#228b22 0 3px,transparent 3px 6px);background-position:0 -1px"></div><div class="a" style="left:1531px;top:176px;width:1px;height:550px;background:repeating-linear-gradient(180deg,#228b22 0 3px,transparent 3px 6px);background-position:0 -1px"></div><div class="a" style="left:1152px;top:202px;width:380px;height:1px;background:repeating-linear-gradient(90deg,transparent 0 3px,#228b22 3px 6px);background-position:0px 0"></div><div class="a" style="left:1152px;top:225px;width:380px;height:1px;background:repeating-linear-gradient(90deg,transparent 0 3px,#228b22 3px 6px);background-position:0px 0"></div><div class="a" style="left:1152px;top:273px;width:380px;height:1px;background:repeating-linear-gradient(90deg,transparent 0 3px,#228b22 3px 6px);background-position:0px 0"></div><div class="a" style="left:1152px;top:321px;width:380px;height:1px;background:repeating-linear-gradient(90deg,transparent 0 3px,#228b22 3px 6px);background-position:0px 0"></div><div class="a" style="left:1152px;top:369px;width:380px;height:1px;background:repeating-linear-gradient(90deg,transparent 0 3px,#228b22 3px 6px);background-position:0px 0"></div><div class="a" style="left:1152px;top:417px;width:380px;height:1px;background:repeating-linear-gradient(90deg,transparent 0 3px,#228b22 3px 6px);background-position:0px 0"></div><div class="a" style="left:1152px;top:465px;width:380px;height:1px;background:repeating-linear-gradient(90deg,transparent 0 3px,#228b22 3px 6px);background-position:0px 0"></div><div class="a" style="left:1152px;top:535px;width:380px;height:1px;background:repeating-linear-gradient(90deg,transparent 0 3px,#228b22 3px 6px);background-position:0px 0"></div><div class="a" style="left:1152px;top:573px;width:380px;height:1px;background:repeating-linear-gradient(90deg,transparent 0 3px,#228b22 3px 6px);background-position:0px 0"></div><div class="a" style="left:1152px;top:611px;width:380px;height:1px;background:repeating-linear-gradient(90deg,transparent 0 3px,#228b22 3px 6px);background-position:0px 0"></div><div class="a" style="left:1152px;top:649px;width:380px;height:1px;background:repeating-linear-gradient(90deg,transparent 0 3px,#228b22 3px 6px);background-position:0px 0"></div><div class="a" style="left:1152px;top:687px;width:380px;height:1px;background:repeating-linear-gradient(90deg,transparent 0 3px,#228b22 3px 6px);background-position:0px 0"></div><div class="t" style="left:1167px;top:181.5px;font-size:15px;letter-spacing:0.122px;color:#e2e2e2">平台杠杆：800</div><div class="t" style="left:1289px;top:181.5px;font-size:15px;letter-spacing:0.0px;color:#e2e2e2">帐户类型：实盘帐户</div><div class="t" style="left:1444.5px;top:181.5px;font-size:15px;letter-spacing:-0.314px;color:#e2e2e2">平台支持EA交易</div><div class="t" style="left:1167px;top:205.5px;font-size:15px;letter-spacing:0.262px;color:#e2e2e2">开户日期：2025.06.03</div><div class="t" style="left:1338.5px;top:205.5px;font-size:15px;letter-spacing:0.04px;color:#e2e2e2">交易周期：12周</div><div class="t" style="left:1462.5px;top:205.5px;font-size:15px;letter-spacing:-0.02px;color:#e2e2e2">存活了56个交易日</div><div class="t" style="left:1262px;top:231.5px;font-size:13px;letter-spacing:0.0px;color:#e2e2e2">总入金</div><div class="t" style="left:1253.5px;top:250.0px;font-size:23.65px;letter-spacing:-0.354px;color:#ffff00">1000.00</div><div class="t" style="left:1392px;top:231.5px;font-size:13px;letter-spacing:0.0px;color:#e2e2e2">总出金</div><div class="t" style="left:1388.5px;top:250.0px;font-size:23.65px;letter-spacing:-0.1px;color:#ffff00">-200.00</div><div class="t" style="left:1262px;top:279.5px;font-size:13px;letter-spacing:0.0px;color:#e2e2e2">总盈亏</div><div class="t" style="left:1253.5px;top:298.0px;font-size:23.65px;letter-spacing:-0.354px;color:#ffff00">1410.70</div><div class="t" style="left:1392px;top:279.5px;font-size:13px;letter-spacing:0.0px;color:#e2e2e2">盈利率</div><div class="t" style="left:1388.5px;top:298.0px;font-size:23.65px;letter-spacing:-0.551px;color:#ffff00">141.07%</div><div class="t" style="left:1227px;top:328px;font-size:13px;letter-spacing:0.0px;color:#e2e2e2">利润因子</div><div class="t" style="left:1228.5px;top:346.5px;font-size:23.65px;letter-spacing:-0.506px;color:#ffff00">7.02</div><div class="t" style="left:1327.5px;top:328px;font-size:13px;letter-spacing:0.0px;color:#e2e2e2">准确率</div><div class="t" style="left:1318px;top:346.5px;font-size:23.65px;letter-spacing:-0.534px;color:#ffff00">72.17%</div><div class="t" style="left:1427.5px;top:328px;font-size:13px;letter-spacing:0.0px;color:#e2e2e2">盈亏比</div><div class="t" style="left:1427.5px;top:346.5px;font-size:23.65px;letter-spacing:-1.006px;color:#ffff00">2.71</div><div class="t" style="left:1262px;top:377.5px;font-size:13px;letter-spacing:0.0px;color:#e2e2e2">最大浮亏</div><div class="t" style="left:1258.5px;top:396.0px;font-size:23.65px;letter-spacing:-0.243px;color:#ffff00">-343.10</div><div class="t" style="left:1392px;top:377.5px;font-size:13px;letter-spacing:0.0px;color:#e2e2e2">余额最大回撤</div><div class="t" style="left:1388.5px;top:396.0px;font-size:23.65px;letter-spacing:-0.226px;color:#ffff00">-19.43%</div><div class="t" style="left:1262px;top:425px;font-size:13px;letter-spacing:0.0px;color:#e2e2e2">最小净值</div><div class="t" style="left:1259px;top:443.5px;font-size:23.65px;letter-spacing:-0.497px;color:#ffff00">1376.06</div><div class="t" style="left:1392px;top:425px;font-size:13px;letter-spacing:0.0px;color:#e2e2e2">本金最大回撤</div><div class="t" style="left:1388px;top:443.5px;font-size:23.65px;letter-spacing:-0.611px;color:#ffff00">0.00%</div><div class="t" style="left:1192.5px;top:473.5px;font-size:13px;letter-spacing:0.0px;color:#e2e2e2">日均收益</div><div class="t" style="left:1258px;top:473.5px;font-size:17.66px;letter-spacing:-0.192px;color:#7cfc00">25.19</div><div class="t" style="left:1342.5px;top:473.5px;font-size:17.66px;letter-spacing:-0.477px;color:#7cfc00">2.52%</div><div class="t" style="left:1192.5px;top:493.5px;font-size:13px;letter-spacing:0.0px;color:#e2e2e2">周均收益</div><div class="t" style="left:1258px;top:493.5px;font-size:17.66px;letter-spacing:-0.174px;color:#7cfc00">125.96</div><div class="t" style="left:1342.5px;top:493.5px;font-size:17.66px;letter-spacing:-0.412px;color:#7cfc00">12.60%</div><div class="t" style="left:1192.5px;top:513.5px;font-size:13px;letter-spacing:0.0px;color:#e2e2e2">月均收益</div><div class="t" style="left:1258px;top:513.5px;font-size:17.66px;letter-spacing:-0.174px;color:#7cfc00">554.20</div><div class="t" style="left:1342.5px;top:513.5px;font-size:17.66px;letter-spacing:-0.412px;color:#7cfc00">55.42%</div><div class="t" style="left:1413px;top:473px;font-size:13px;letter-spacing:0.005px;color:#e2e2e2">[ 预期年化收益 ]</div><div class="t" style="left:1413px;top:497.5px;font-size:23.65px;letter-spacing:-0.537px;color:#7cfc00">665.04%</div><div class="t" style="left:1172.5px;top:539px;font-size:13px;letter-spacing:0.0px;color:#e2e2e2">交易手数</div><div class="t" style="left:1172.5px;top:553px;font-size:17.66px;letter-spacing:-0.218px;color:#7cfc00">5.48</div><div class="t" style="left:1280.5px;top:539px;font-size:13px;letter-spacing:0.0px;color:#e2e2e2">日均手数</div><div class="t" style="left:1257.5px;top:553px;font-size:17.66px;letter-spacing:-0.218px;color:#7cfc00">0.10</div><div class="t" style="left:1357px;top:539px;font-size:13px;letter-spacing:0.0px;color:#e2e2e2">周均手数</div><div class="t" style="left:1357px;top:553px;font-size:17.66px;letter-spacing:-0.218px;color:#7cfc00">0.49</div><div class="t" style="left:1469px;top:539px;font-size:13px;letter-spacing:0.0px;color:#e2e2e2">月均手数</div><div class="t" style="left:1447.5px;top:553px;font-size:17.66px;letter-spacing:-0.218px;color:#7cfc00">2.15</div><div class="t" style="left:1172.5px;top:577px;font-size:13px;letter-spacing:0.0px;color:#e2e2e2">交易笔数</div><div class="t" style="left:1172.5px;top:591px;font-size:17.66px;letter-spacing:0.351px;color:#7cfc00">115</div><div class="t" style="left:1280.5px;top:577px;font-size:13px;letter-spacing:0.0px;color:#e2e2e2">盈利笔数</div><div class="t" style="left:1257.5px;top:591px;font-size:17.66px;letter-spacing:-0.086px;color:#7cfc00">83</div><div class="t" style="left:1357px;top:577px;font-size:13px;letter-spacing:0.0px;color:#e2e2e2">亏损笔数</div><div class="t" style="left:1357px;top:591px;font-size:17.66px;letter-spacing:-0.086px;color:#7cfc00">32</div><div class="t" style="left:1469px;top:577px;font-size:13px;letter-spacing:0.0px;color:#e2e2e2">平均交易</div><div class="t" style="left:1447.5px;top:591px;font-size:17.66px;letter-spacing:-0.138px;color:#7cfc00">2笔/天</div><div class="t" style="left:1172.5px;top:615px;font-size:13px;letter-spacing:0.0px;color:#e2e2e2">最大手数</div><div class="t" style="left:1172.5px;top:629px;font-size:17.66px;letter-spacing:-0.218px;color:#7cfc00">0.32</div><div class="t" style="left:1284.5px;top:615px;font-size:13px;letter-spacing:0.0px;color:#e2e2e2">最小手数</div><div class="t" style="left:1257.5px;top:629px;font-size:17.66px;letter-spacing:-0.218px;color:#7cfc00">0.03</div><div class="t" style="left:1357px;top:615px;font-size:13px;letter-spacing:0.0px;color:#e2e2e2">平均持仓时间</div><div class="t" style="left:1357px;top:629px;font-size:17.66px;letter-spacing:-0.546px;color:#7cfc00">63小时44分</div><div class="t" style="left:1471.5px;top:615px;font-size:13px;letter-spacing:0.0px;color:#e2e2e2">交易品种</div><div class="t" style="left:1462.5px;top:629px;font-size:17.66px;letter-spacing:-0.086px;color:#7cfc00">22</div><div class="t" style="left:1172.5px;top:653px;font-size:13px;letter-spacing:0.0px;color:#e2e2e2">最大盈利</div><div class="t" style="left:1172.5px;top:667px;font-size:17.66px;letter-spacing:-0.174px;color:#7cfc00">151.92</div><div class="t" style="left:1280.5px;top:653px;font-size:13px;letter-spacing:0.0px;color:#e2e2e2">最大亏损</div><div class="t" style="left:1257.5px;top:667px;font-size:17.66px;letter-spacing:-0.067px;color:#7cfc00">-42.50</div><div class="t" style="left:1357px;top:653px;font-size:13px;letter-spacing:0.0px;color:#e2e2e2">平均盈利</div><div class="t" style="left:1357px;top:667px;font-size:17.66px;letter-spacing:-0.192px;color:#7cfc00">19.82</div><div class="t" style="left:1469px;top:653px;font-size:13px;letter-spacing:0.0px;color:#e2e2e2">平均亏损</div><div class="t" style="left:1447.5px;top:667px;font-size:17.66px;letter-spacing:-0.064px;color:#7cfc00">-7.32</div><div class="t" style="left:1172.5px;top:691px;font-size:13px;letter-spacing:0.0px;color:#e2e2e2">手工交易</div><div class="t" style="left:1172.5px;top:705px;font-size:17.66px;letter-spacing:-0.444px;color:#7cfc00">71笔</div><div class="t" style="left:1280.5px;top:691px;font-size:13px;letter-spacing:-0.408px;color:#e2e2e2">EA交易</div><div class="t" style="left:1257.5px;top:705px;font-size:17.66px;letter-spacing:-0.444px;color:#7cfc00">44笔</div><div class="t" style="left:1357px;top:691px;font-size:13px;letter-spacing:0.0px;color:#e2e2e2">手工盈亏</div><div class="t" style="left:1357px;top:705px;font-size:17.66px;letter-spacing:0.026px;color:#7cfc00">1151.72</div><div class="t" style="left:1469px;top:691px;font-size:13px;letter-spacing:-0.408px;color:#e2e2e2">EA盈亏</div><div class="t" style="left:1447.5px;top:705px;font-size:17.66px;letter-spacing:-0.174px;color:#7cfc00">258.98</div><div class="a" style="left:352px;top:769px;width:1566px;height:27px;background:#f0f0f0"></div><div class="a" style="left:352px;top:769px;width:1566px;height:1px;background:#000"></div><div class="a" style="left:352px;top:770px;width:2px;height:23px;background:linear-gradient(90deg,#9a9a9a,#6a6a6a)"></div><div class="a" style="left:359px;top:769px;width:120px;height:24px;background:#fff;border:1px solid #000;border-top:0;box-shadow:1px 1px 0 #666"></div><div class="t" style="left:373.5px;top:771.5px;font-size:15.45px;letter-spacing:-0.661px;">USDJPYx,M5</div><div class="t" style="left:492px;top:771.5px;font-size:15.45px;letter-spacing:-0.463px;color:#7a7a7a">EURNZDx,H1</div><div class="a" style="left:599px;top:773px;width:1px;height:18px;background:#6a6a6a"></div><div class="a" style="left:1879px;top:776px;border-top:4px solid transparent;border-bottom:4px solid transparent;border-right:5px solid #9a9a9a"></div><div class="a" style="left:1903px;top:776px;border-top:4px solid transparent;border-bottom:4px solid transparent;border-left:5px solid #9a9a9a"></div><div class="a" style="left:0px;top:795px;width:1918px;height:1px;background:#fff"></div><div class="a" style="left:0px;top:796px;width:1918px;height:259px;background:#f0f0f0"></div><div class="a" style="left:0px;top:796px;width:1918px;height:1px;background:#e3e3e3"></div><svg class="a" style="left:5px;top:800px" width="10" height="10" viewBox="0 0 10 10"><path d="M1.500 1.500l7 7M8.500 1.500l-7 7" stroke="#000" stroke-width="1.600"/></svg><div class="a" style="left:3px;top:818px;width:16px;height:227px;background:linear-gradient(#d6e2ef,#c3d3e6)"></div><div class="a" style="left:4px;top:1013px;width:14px;height:30px;overflow:hidden"><div class="a" style="left:-8px;top:8px;width:30px;text-align:center;font-size:12px;line-height:14px;color:#111;transform:rotate(-90deg)">终端</div></div><div class="a" style="left:20px;top:799px;width:1895px;height:220px;background:#fff;border-top:1px solid #828282;border-left:1px solid #828282"></div><div class="a" style="left:1893px;top:800px;width:22px;height:219px;background:#f0f0f0"></div><div class="a" style="left:1900px;top:822px;width:4px;height:19px;background:#6a6a6a;border-radius:2px"></div><div class="a" style="left:21px;top:826px;width:1872px;height:1px;background:#d0d0d0"></div><div class="a" style="left:186px;top:803px;width:1px;height:23px;background:#e2e2e2"></div><div class="a" style="left:468px;top:803px;width:1px;height:23px;background:#e2e2e2"></div><div class="a" style="left:596px;top:803px;width:1px;height:23px;background:#e2e2e2"></div><div class="a" style="left:698px;top:803px;width:1px;height:23px;background:#e2e2e2"></div><div class="a" style="left:826px;top:803px;width:1px;height:23px;background:#e2e2e2"></div><div class="a" style="left:954px;top:803px;width:1px;height:23px;background:#e2e2e2"></div><div class="a" style="left:1082px;top:803px;width:1px;height:23px;background:#e2e2e2"></div><div class="a" style="left:1210px;top:803px;width:1px;height:23px;background:#e2e2e2"></div><div class="a" style="left:1492px;top:803px;width:1px;height:23px;background:#e2e2e2"></div><div class="a" style="left:1620px;top:803px;width:1px;height:23px;background:#e2e2e2"></div><div class="a" style="left:1748px;top:803px;width:1px;height:23px;background:#e2e2e2"></div><div class="a" style="left:1893px;top:803px;width:1px;height:23px;background:#e2e2e2"></div><div class="t" style="left:27px;top:803.5px;font-size:15.45px;letter-spacing:-0.45px;">订单</div><div class="t r" style="left:-57px;width:500px;top:803.5px;margin-left:-0.45px;font-size:15.45px;letter-spacing:-0.45px;">时间</div><div class="t r" style="left:91px;width:500px;top:803.5px;margin-left:-0.45px;font-size:15.45px;letter-spacing:-0.45px;">类型</div><div class="t r" style="left:193px;width:500px;top:803.5px;margin-left:-0.45px;font-size:15.45px;letter-spacing:-0.45px;">手数</div><div class="t r" style="left:321px;width:500px;top:803.5px;margin-left:-0.45px;font-size:15.45px;letter-spacing:-0.45px;">交易品种</div><div class="t r" style="left:449px;width:500px;top:803.5px;margin-left:-0.45px;font-size:15.45px;letter-spacing:-0.45px;">价格</div><div class="t r" style="left:577px;width:500px;top:803.5px;margin-left:-0.45px;font-size:15.45px;letter-spacing:-0.45px;">止损</div><div class="t r" style="left:705px;width:500px;top:803.5px;margin-left:-0.45px;font-size:15.45px;letter-spacing:-0.45px;">止盈</div><div class="t r" style="left:987px;width:500px;top:803.5px;margin-left:-0.45px;font-size:15.45px;letter-spacing:-0.45px;">时间</div><div class="t r" style="left:1115px;width:500px;top:803.5px;margin-left:-0.45px;font-size:15.45px;letter-spacing:-0.45px;">价格</div><div class="t r" style="left:1243px;width:500px;top:803.5px;margin-left:-0.45px;font-size:15.45px;letter-spacing:-0.45px;">库存费</div><div class="t r" style="left:1388px;width:500px;top:803.5px;margin-left:-0.45px;font-size:15.45px;letter-spacing:-0.45px;">获利</div><svg class="a" style="left:454px;top:809px" width="6" height="8" viewBox="0 0 6 8"><path d="M1 7L5 1" stroke="#777" stroke-width="1"/></svg><div class="a" style="left:21px;top:827px;width:1872px;height:191px;overflow:hidden"><div class="a" style="left:0;top:0px;width:1872px;height:25px;background:#fff;border-bottom:1px solid #d2d2d2"></div><div class="a" style="left:165px;top:0px;width:1px;height:25px;background:#d2d2d2"></div><div class="a" style="left:447px;top:0px;width:1px;height:25px;background:#d2d2d2"></div><div class="a" style="left:575px;top:0px;width:1px;height:25px;background:#d2d2d2"></div><div class="a" style="left:1599px;top:0px;width:1px;height:25px;background:#d2d2d2"></div><div class="a" style="left:1727px;top:0px;width:1px;height:25px;background:#d2d2d2"></div><svg class="a" style="left:4px;top:3px" width="18" height="18" viewBox="0 0 18 18"><rect x=".5" y=".5" width="15" height="15" rx="1.500" fill="#f6f6f6" stroke="#9a9a9a"/><path d="M8 3l4.500 4.500H10V12H6V7.500H3.500z" fill="#1fa51f" stroke="#0c6a0c" stroke-width=".7"/></svg><div class="t" style="left:27px;top:1.5px;font-size:15.45px;letter-spacing:0.258px;">20441270</div><div class="t r" style="left:-57px;width:500px;top:1.5px;margin-left:0.142px;font-size:15.45px;letter-spacing:0.142px;">2025.06.03 06:13:19</div><div class="t r" style="left:71px;width:500px;top:1.5px;margin-left:0.277px;font-size:15.45px;letter-spacing:0.277px;">balance</div><div class="t r" style="left:1223px;width:500px;top:1.5px;margin-left:0.4px;font-size:15.45px;letter-spacing:0.4px;">transfer</div><div class="t r" style="left:1366px;width:500px;top:1.5px;margin-left:0.227px;font-size:15.45px;letter-spacing:0.227px;">1 000.00</div><div class="a" style="left:0;top:25px;width:1872px;height:25px;background:#ebebeb;border-bottom:1px solid #d2d2d2"></div><div class="a" style="left:165px;top:25px;width:1px;height:25px;background:#d2d2d2"></div><div class="a" style="left:447px;top:25px;width:1px;height:25px;background:#d2d2d2"></div><div class="a" style="left:575px;top:25px;width:1px;height:25px;background:#d2d2d2"></div><div class="a" style="left:677px;top:25px;width:1px;height:25px;background:#d2d2d2"></div><div class="a" style="left:805px;top:25px;width:1px;height:25px;background:#d2d2d2"></div><div class="a" style="left:933px;top:25px;width:1px;height:25px;background:#d2d2d2"></div><div class="a" style="left:1061px;top:25px;width:1px;height:25px;background:#d2d2d2"></div><div class="a" style="left:1189px;top:25px;width:1px;height:25px;background:#d2d2d2"></div><div class="a" style="left:1471px;top:25px;width:1px;height:25px;background:#d2d2d2"></div><div class="a" style="left:1599px;top:25px;width:1px;height:25px;background:#d2d2d2"></div><div class="a" style="left:1727px;top:25px;width:1px;height:25px;background:#d2d2d2"></div><svg class="a" style="left:4px;top:28px" width="19" height="19" viewBox="0 0 19 19"><path d="M1.500 1.500h8l4 4v11h-12z" fill="#fff" stroke="#7a7a7a" stroke-width="1.200"/><path d="M9.500 1.500v4h4" fill="none" stroke="#7a7a7a"/><circle cx="13.500" cy="14" r="4" fill="#2a8ae6" stroke="#0003" stroke-width=".6"/></svg><div class="t" style="left:27px;top:26.5px;font-size:15.45px;letter-spacing:0.258px;">20481063</div><div class="t r" style="left:-57px;width:500px;top:26.5px;margin-left:0.142px;font-size:15.45px;letter-spacing:0.142px;">2025.06.04 21:08:01</div><div class="t r" style="left:71px;width:500px;top:26.5px;margin-left:0.785px;font-size:15.45px;letter-spacing:0.785px;">buy limit</div><div class="t r" style="left:173px;width:500px;top:26.5px;margin-left:0.096px;font-size:15.45px;letter-spacing:0.096px;">1.00</div><div class="t r" style="left:301px;width:500px;top:26.5px;margin-left:0.332px;font-size:15.45px;letter-spacing:0.332px;">eurusdx</div><div class="t r" style="left:429px;width:500px;top:26.5px;margin-left:0.329px;font-size:15.45px;letter-spacing:0.329px;">1.11394</div><div class="t r" style="left:557px;width:500px;top:26.5px;margin-left:0.165px;font-size:15.45px;letter-spacing:0.165px;">0.00000</div><div class="t r" style="left:685px;width:500px;top:26.5px;margin-left:0.165px;font-size:15.45px;letter-spacing:0.165px;">0.00000</div><div class="t r" style="left:967px;width:500px;top:26.5px;margin-left:0.142px;font-size:15.45px;letter-spacing:0.142px;">2025.06.04 21:08:08</div><div class="t r" style="left:1095px;width:500px;top:26.5px;margin-left:0.165px;font-size:15.45px;letter-spacing:0.165px;">1.14283</div><div class="a" style="left:0;top:50px;width:1872px;height:25px;background:#fff;border-bottom:1px solid #d2d2d2"></div><div class="a" style="left:165px;top:50px;width:1px;height:25px;background:#d2d2d2"></div><div class="a" style="left:447px;top:50px;width:1px;height:25px;background:#d2d2d2"></div><div class="a" style="left:575px;top:50px;width:1px;height:25px;background:#d2d2d2"></div><div class="a" style="left:677px;top:50px;width:1px;height:25px;background:#d2d2d2"></div><div class="a" style="left:805px;top:50px;width:1px;height:25px;background:#d2d2d2"></div><div class="a" style="left:933px;top:50px;width:1px;height:25px;background:#d2d2d2"></div><div class="a" style="left:1061px;top:50px;width:1px;height:25px;background:#d2d2d2"></div><div class="a" style="left:1189px;top:50px;width:1px;height:25px;background:#d2d2d2"></div><div class="a" style="left:1471px;top:50px;width:1px;height:25px;background:#d2d2d2"></div><div class="a" style="left:1599px;top:50px;width:1px;height:25px;background:#d2d2d2"></div><div class="a" style="left:1727px;top:50px;width:1px;height:25px;background:#d2d2d2"></div><svg class="a" style="left:4px;top:53px" width="19" height="19" viewBox="0 0 19 19"><path d="M1.500 1.500h8l4 4v11h-12z" fill="#fff" stroke="#7a7a7a" stroke-width="1.200"/><path d="M9.500 1.500v4h4" fill="none" stroke="#7a7a7a"/><circle cx="13.500" cy="14" r="4" fill="#2a8ae6" stroke="#0003" stroke-width=".6"/></svg><div class="t" style="left:27px;top:51.5px;font-size:15.45px;letter-spacing:0.258px;">20481081</div><div class="t r" style="left:-57px;width:500px;top:51.5px;margin-left:0.142px;font-size:15.45px;letter-spacing:0.142px;">2025.06.04 21:13:24</div><div class="t r" style="left:71px;width:500px;top:51.5px;margin-left:0.785px;font-size:15.45px;letter-spacing:0.785px;">buy limit</div><div class="t r" style="left:173px;width:500px;top:51.5px;margin-left:0.096px;font-size:15.45px;letter-spacing:0.096px;">0.20</div><div class="t r" style="left:301px;width:500px;top:51.5px;margin-left:0.332px;font-size:15.45px;letter-spacing:0.332px;">eurusdx</div><div class="t r" style="left:429px;width:500px;top:51.5px;margin-left:0.165px;font-size:15.45px;letter-spacing:0.165px;">1.12895</div><div class="t r" style="left:557px;width:500px;top:51.5px;margin-left:0.165px;font-size:15.45px;letter-spacing:0.165px;">0.00000</div><div class="t r" style="left:685px;width:500px;top:51.5px;margin-left:0.165px;font-size:15.45px;letter-spacing:0.165px;">0.00000</div><div class="t r" style="left:967px;width:500px;top:51.5px;margin-left:0.142px;font-size:15.45px;letter-spacing:0.142px;">2025.06.04 21:14:15</div><div class="t r" style="left:1095px;width:500px;top:51.5px;margin-left:0.165px;font-size:15.45px;letter-spacing:0.165px;">1.14277</div><div class="a" style="left:0;top:75px;width:1872px;height:25px;background:#ebebeb;border-bottom:1px solid #d2d2d2"></div><div class="a" style="left:165px;top:75px;width:1px;height:25px;background:#d2d2d2"></div><div class="a" style="left:447px;top:75px;width:1px;height:25px;background:#d2d2d2"></div><div class="a" style="left:575px;top:75px;width:1px;height:25px;background:#d2d2d2"></div><div class="a" style="left:677px;top:75px;width:1px;height:25px;background:#d2d2d2"></div><div class="a" style="left:805px;top:75px;width:1px;height:25px;background:#d2d2d2"></div><div class="a" style="left:933px;top:75px;width:1px;height:25px;background:#d2d2d2"></div><div class="a" style="left:1061px;top:75px;width:1px;height:25px;background:#d2d2d2"></div><div class="a" style="left:1189px;top:75px;width:1px;height:25px;background:#d2d2d2"></div><div class="a" style="left:1471px;top:75px;width:1px;height:25px;background:#d2d2d2"></div><div class="a" style="left:1599px;top:75px;width:1px;height:25px;background:#d2d2d2"></div><div class="a" style="left:1727px;top:75px;width:1px;height:25px;background:#d2d2d2"></div><svg class="a" style="left:4px;top:78px" width="19" height="19" viewBox="0 0 19 19"><path d="M1.500 1.500h8l4 4v11h-12z" fill="#fff" stroke="#7a7a7a" stroke-width="1.200"/><path d="M9.500 1.500v4h4" fill="none" stroke="#7a7a7a"/><circle cx="13.500" cy="14" r="4" fill="#2a8ae6" stroke="#0003" stroke-width=".6"/></svg><div class="t" style="left:27px;top:76.5px;font-size:15.45px;letter-spacing:0.258px;">20481086</div><div class="t r" style="left:-57px;width:500px;top:76.5px;margin-left:0.142px;font-size:15.45px;letter-spacing:0.142px;">2025.06.04 21:14:52</div><div class="t r" style="left:71px;width:500px;top:76.5px;margin-left:0.785px;font-size:15.45px;letter-spacing:0.785px;">buy limit</div><div class="t r" style="left:173px;width:500px;top:76.5px;margin-left:0.096px;font-size:15.45px;letter-spacing:0.096px;">0.20</div><div class="t r" style="left:301px;width:500px;top:76.5px;margin-left:0.332px;font-size:15.45px;letter-spacing:0.332px;">eurusdx</div><div class="t r" style="left:429px;width:500px;top:76.5px;margin-left:0.165px;font-size:15.45px;letter-spacing:0.165px;">1.12986</div><div class="t r" style="left:557px;width:500px;top:76.5px;margin-left:0.165px;font-size:15.45px;letter-spacing:0.165px;">0.00000</div><div class="t r" style="left:685px;width:500px;top:76.5px;margin-left:0.165px;font-size:15.45px;letter-spacing:0.165px;">0.00000</div><div class="t r" style="left:967px;width:500px;top:76.5px;margin-left:0.142px;font-size:15.45px;letter-spacing:0.142px;">2025.06.04 21:15:23</div><div class="t r" style="left:1095px;width:500px;top:76.5px;margin-left:0.165px;font-size:15.45px;letter-spacing:0.165px;">1.14283</div><div class="a" style="left:0;top:100px;width:1872px;height:25px;background:#fff;border-bottom:1px solid #d2d2d2"></div><div class="a" style="left:165px;top:100px;width:1px;height:25px;background:#d2d2d2"></div><div class="a" style="left:447px;top:100px;width:1px;height:25px;background:#d2d2d2"></div><div class="a" style="left:575px;top:100px;width:1px;height:25px;background:#d2d2d2"></div><div class="a" style="left:677px;top:100px;width:1px;height:25px;background:#d2d2d2"></div><div class="a" style="left:805px;top:100px;width:1px;height:25px;background:#d2d2d2"></div><div class="a" style="left:933px;top:100px;width:1px;height:25px;background:#d2d2d2"></div><div class="a" style="left:1061px;top:100px;width:1px;height:25px;background:#d2d2d2"></div><div class="a" style="left:1189px;top:100px;width:1px;height:25px;background:#d2d2d2"></div><div class="a" style="left:1471px;top:100px;width:1px;height:25px;background:#d2d2d2"></div><div class="a" style="left:1599px;top:100px;width:1px;height:25px;background:#d2d2d2"></div><div class="a" style="left:1727px;top:100px;width:1px;height:25px;background:#d2d2d2"></div><svg class="a" style="left:4px;top:103px" width="19" height="19" viewBox="0 0 19 19"><path d="M1.500 1.500h8l4 4v11h-12z" fill="#fff" stroke="#7a7a7a" stroke-width="1.200"/><path d="M9.500 1.500v4h4" fill="none" stroke="#7a7a7a"/><circle cx="13.500" cy="14" r="4" fill="#2a8ae6" stroke="#0003" stroke-width=".6"/></svg><div class="t" style="left:27px;top:101.5px;font-size:15.45px;letter-spacing:0.258px;">21240339</div><div class="t r" style="left:-57px;width:500px;top:101.5px;margin-left:0.203px;font-size:15.45px;letter-spacing:0.203px;">2025.07.11 13:28:03</div><div class="t r" style="left:71px;width:500px;top:101.5px;margin-left:0.699px;font-size:15.45px;letter-spacing:0.699px;">buy</div><div class="t r" style="left:173px;width:500px;top:101.5px;margin-left:0.096px;font-size:15.45px;letter-spacing:0.096px;">0.04</div><div class="t r" style="left:301px;width:500px;top:101.5px;margin-left:0.678px;font-size:15.45px;letter-spacing:0.678px;">gbpnzdx</div><div class="t r" style="left:429px;width:500px;top:101.5px;margin-left:0.165px;font-size:15.45px;letter-spacing:0.165px;">2.24840</div><div class="t r" style="left:557px;width:500px;top:101.5px;margin-left:0.165px;font-size:15.45px;letter-spacing:0.165px;">0.00000</div><div class="t r" style="left:685px;width:500px;top:101.5px;margin-left:0.165px;font-size:15.45px;letter-spacing:0.165px;">2.24965</div><div class="t r" style="left:967px;width:500px;top:101.5px;margin-left:0.142px;font-size:15.45px;letter-spacing:0.142px;">2025.07.15 17:24:51</div><div class="t r" style="left:1095px;width:500px;top:101.5px;margin-left:0.165px;font-size:15.45px;letter-spacing:0.165px;">2.24870</div><div class="t r" style="left:1223px;width:500px;top:101.5px;margin-left:0.218px;font-size:15.45px;letter-spacing:0.218px;">-0.46</div><div class="t r" style="left:1366px;width:500px;top:101.5px;margin-left:0.096px;font-size:15.45px;letter-spacing:0.096px;">0.71</div><div class="a" style="left:0;top:125px;width:1872px;height:25px;background:#ebebeb;border-bottom:1px solid #d2d2d2"></div><div class="a" style="left:165px;top:125px;width:1px;height:25px;background:#d2d2d2"></div><div class="a" style="left:447px;top:125px;width:1px;height:25px;background:#d2d2d2"></div><div class="a" style="left:575px;top:125px;width:1px;height:25px;background:#d2d2d2"></div><div class="a" style="left:677px;top:125px;width:1px;height:25px;background:#d2d2d2"></div><div class="a" style="left:805px;top:125px;width:1px;height:25px;background:#d2d2d2"></div><div class="a" style="left:933px;top:125px;width:1px;height:25px;background:#d2d2d2"></div><div class="a" style="left:1061px;top:125px;width:1px;height:25px;background:#d2d2d2"></div><div class="a" style="left:1189px;top:125px;width:1px;height:25px;background:#d2d2d2"></div><div class="a" style="left:1471px;top:125px;width:1px;height:25px;background:#d2d2d2"></div><div class="a" style="left:1599px;top:125px;width:1px;height:25px;background:#d2d2d2"></div><div class="a" style="left:1727px;top:125px;width:1px;height:25px;background:#d2d2d2"></div><div class="a" style="left:1062px;top:125px;width:125px;height:24px;background:#5ae85a"></div><svg class="a" style="left:4px;top:128px" width="19" height="19" viewBox="0 0 19 19"><path d="M1.500 1.500h8l4 4v11h-12z" fill="#fff" stroke="#7a7a7a" stroke-width="1.200"/><path d="M9.500 1.500v4h4" fill="none" stroke="#7a7a7a"/><circle cx="13.500" cy="14" r="4" fill="#2a8ae6" stroke="#0003" stroke-width=".6"/></svg><div class="t" style="left:27px;top:126.5px;font-size:15.45px;letter-spacing:0.258px;">21240341</div><div class="t r" style="left:-57px;width:500px;top:126.5px;margin-left:0.203px;font-size:15.45px;letter-spacing:0.203px;">2025.07.11 13:28:04</div><div class="t r" style="left:71px;width:500px;top:126.5px;margin-left:0.699px;font-size:15.45px;letter-spacing:0.699px;">buy</div><div class="t r" style="left:173px;width:500px;top:126.5px;margin-left:0.096px;font-size:15.45px;letter-spacing:0.096px;">0.04</div><div class="t r" style="left:301px;width:500px;top:126.5px;margin-left:0.407px;font-size:15.45px;letter-spacing:0.407px;">euraudx</div><div class="t r" style="left:429px;width:500px;top:126.5px;margin-left:0.165px;font-size:15.45px;letter-spacing:0.165px;">1.77583</div><div class="t r" style="left:557px;width:500px;top:126.5px;margin-left:0.165px;font-size:15.45px;letter-spacing:0.165px;">0.00000</div><div class="t r" style="left:685px;width:500px;top:126.5px;margin-left:0.165px;font-size:15.45px;letter-spacing:0.165px;">1.78589</div><div class="t r" style="left:967px;width:500px;top:126.5px;margin-left:0.142px;font-size:15.45px;letter-spacing:0.142px;">2025.07.16 18:16:32</div><div class="t r" style="left:1095px;width:500px;top:126.5px;margin-left:0.165px;font-size:15.45px;letter-spacing:0.165px;">1.78589</div><div class="t r" style="left:1223px;width:500px;top:126.5px;margin-left:0.218px;font-size:15.45px;letter-spacing:0.218px;">-0.57</div><div class="t r" style="left:1366px;width:500px;top:126.5px;margin-left:0.128px;font-size:15.45px;letter-spacing:0.128px;">26.26</div><div class="a" style="left:0;top:150px;width:1872px;height:25px;background:#fff;border-bottom:1px solid #d2d2d2"></div><div class="a" style="left:165px;top:150px;width:1px;height:25px;background:#d2d2d2"></div><div class="a" style="left:447px;top:150px;width:1px;height:25px;background:#d2d2d2"></div><div class="a" style="left:575px;top:150px;width:1px;height:25px;background:#d2d2d2"></div><div class="a" style="left:677px;top:150px;width:1px;height:25px;background:#d2d2d2"></div><div class="a" style="left:805px;top:150px;width:1px;height:25px;background:#d2d2d2"></div><div class="a" style="left:933px;top:150px;width:1px;height:25px;background:#d2d2d2"></div><div class="a" style="left:1061px;top:150px;width:1px;height:25px;background:#d2d2d2"></div><div class="a" style="left:1189px;top:150px;width:1px;height:25px;background:#d2d2d2"></div><div class="a" style="left:1471px;top:150px;width:1px;height:25px;background:#d2d2d2"></div><div class="a" style="left:1599px;top:150px;width:1px;height:25px;background:#d2d2d2"></div><div class="a" style="left:1727px;top:150px;width:1px;height:25px;background:#d2d2d2"></div><svg class="a" style="left:4px;top:153px" width="19" height="19" viewBox="0 0 19 19"><path d="M1.500 1.500h8l4 4v11h-12z" fill="#fff" stroke="#7a7a7a" stroke-width="1.200"/><path d="M9.500 1.500v4h4" fill="none" stroke="#7a7a7a"/><circle cx="13.500" cy="14" r="4" fill="#e0401c" stroke="#0003" stroke-width=".6"/></svg><div class="t" style="left:27px;top:151.5px;font-size:15.45px;letter-spacing:0.258px;">21240343</div><div class="t r" style="left:-57px;width:500px;top:151.5px;margin-left:0.203px;font-size:15.45px;letter-spacing:0.203px;">2025.07.11 13:28:04</div><div class="t r" style="left:71px;width:500px;top:151.5px;margin-left:0.11px;font-size:15.45px;letter-spacing:0.11px;">sell</div><div class="t r" style="left:173px;width:500px;top:151.5px;margin-left:0.096px;font-size:15.45px;letter-spacing:0.096px;">0.04</div><div class="t r" style="left:301px;width:500px;top:151.5px;margin-left:0.37px;font-size:15.45px;letter-spacing:0.37px;">cadjpyx</div><div class="t r" style="left:429px;width:500px;top:151.5px;margin-left:0.165px;font-size:15.45px;letter-spacing:0.165px;">107.274</div><div class="t r" style="left:557px;width:500px;top:151.5px;margin-left:0.128px;font-size:15.45px;letter-spacing:0.128px;">0.000</div><div class="t r" style="left:685px;width:500px;top:151.5px;margin-left:0.165px;font-size:15.45px;letter-spacing:0.165px;">107.826</div><div class="t r" style="left:967px;width:500px;top:151.5px;margin-left:0.142px;font-size:15.45px;letter-spacing:0.142px;">2025.07.16 18:10:22</div><div class="t r" style="left:1095px;width:500px;top:151.5px;margin-left:0.165px;font-size:15.45px;letter-spacing:0.165px;">107.952</div><div class="t r" style="left:1223px;width:500px;top:151.5px;margin-left:0.218px;font-size:15.45px;letter-spacing:0.218px;">-1.17</div><div class="t r" style="left:1366px;width:500px;top:151.5px;margin-left:0.224px;font-size:15.45px;letter-spacing:0.224px;">-18.30</div><div class="a" style="left:0;top:175px;width:1872px;height:25px;background:#ebebeb;border-bottom:1px solid #d2d2d2"></div><div class="a" style="left:165px;top:175px;width:1px;height:25px;background:#d2d2d2"></div><div class="a" style="left:447px;top:175px;width:1px;height:25px;background:#d2d2d2"></div><div class="a" style="left:575px;top:175px;width:1px;height:25px;background:#d2d2d2"></div><div class="a" style="left:677px;top:175px;width:1px;height:25px;background:#d2d2d2"></div><div class="a" style="left:805px;top:175px;width:1px;height:25px;background:#d2d2d2"></div><div class="a" style="left:933px;top:175px;width:1px;height:25px;background:#d2d2d2"></div><div class="a" style="left:1061px;top:175px;width:1px;height:25px;background:#d2d2d2"></div><div class="a" style="left:1189px;top:175px;width:1px;height:25px;background:#d2d2d2"></div><div class="a" style="left:1471px;top:175px;width:1px;height:25px;background:#d2d2d2"></div><div class="a" style="left:1599px;top:175px;width:1px;height:25px;background:#d2d2d2"></div><div class="a" style="left:1727px;top:175px;width:1px;height:25px;background:#d2d2d2"></div><svg class="a" style="left:4px;top:178px" width="19" height="19" viewBox="0 0 19 19"><path d="M1.500 1.500h8l4 4v11h-12z" fill="#fff" stroke="#7a7a7a" stroke-width="1.200"/><path d="M9.500 1.500v4h4" fill="none" stroke="#7a7a7a"/><circle cx="13.500" cy="14" r="4" fill="#2a8ae6" stroke="#0003" stroke-width=".6"/></svg><div class="t" style="left:27px;top:176.5px;font-size:15.45px;letter-spacing:0.258px;">21240344</div><div class="t r" style="left:-57px;width:500px;top:176.5px;margin-left:0.203px;font-size:15.45px;letter-spacing:0.203px;">2025.07.11 13:28:04</div><div class="t r" style="left:71px;width:500px;top:176.5px;margin-left:0.699px;font-size:15.45px;letter-spacing:0.699px;">buy</div><div class="t r" style="left:173px;width:500px;top:176.5px;margin-left:0.096px;font-size:15.45px;letter-spacing:0.096px;">0.04</div><div class="t r" style="left:301px;width:500px;top:176.5px;margin-left:0.308px;font-size:15.45px;letter-spacing:0.308px;">cadchfx</div><div class="t r" style="left:429px;width:500px;top:176.5px;margin-left:0.165px;font-size:15.45px;letter-spacing:0.165px;">0.58148</div><div class="t r" style="left:557px;width:500px;top:176.5px;margin-left:0.165px;font-size:15.45px;letter-spacing:0.165px;">0.00000</div><div class="t r" style="left:685px;width:500px;top:176.5px;margin-left:0.165px;font-size:15.45px;letter-spacing:0.165px;">0.58817</div><div class="t r" style="left:967px;width:500px;top:176.5px;margin-left:0.142px;font-size:15.45px;letter-spacing:0.142px;">2025.07.29 10:10:19</div><div class="t r" style="left:1095px;width:500px;top:176.5px;margin-left:0.165px;font-size:15.45px;letter-spacing:0.165px;">0.58660</div><div class="t r" style="left:1223px;width:500px;top:176.5px;margin-left:0.096px;font-size:15.45px;letter-spacing:0.096px;">2.26</div><div class="t r" style="left:1366px;width:500px;top:176.5px;margin-left:0.128px;font-size:15.45px;letter-spacing:0.128px;">25.39</div></div><div class="a" style="left:20px;top:1018px;width:1895px;height:1px;background:#000"></div><div class="a" style="left:133px;top:1018px;width:85px;height:25px;background:#fff;border:1px solid #000;border-top:0;box-shadow:1px 1px 0 #666"></div><div class="t" style="left:36px;top:1021px;font-size:15.45px;letter-spacing:-0.45px;color:#7a7a7a">交易</div><div class="t" style="left:91px;top:1021px;font-size:15.45px;letter-spacing:-0.45px;color:#7a7a7a">展示</div><div class="t" style="left:146px;top:1021px;font-size:15.45px;letter-spacing:-0.45px;color:#000">账户历史</div><div class="t" style="left:231px;top:1021px;font-size:15.45px;letter-spacing:-0.45px;color:#7a7a7a">新闻</div><div class="t" style="left:286px;top:1021px;font-size:15.45px;letter-spacing:-0.45px;color:#7a7a7a">警报</div><div class="t" style="left:341px;top:1021px;font-size:15.45px;letter-spacing:-0.45px;color:#7a7a7a">邮箱</div><div class="t" style="left:406px;top:1021px;font-size:15.45px;letter-spacing:-0.45px;color:#7a7a7a">市场</div><div class="t" style="left:461px;top:1021px;font-size:15.45px;letter-spacing:-0.45px;color:#7a7a7a">文章</div><div class="t" style="left:526px;top:1021px;font-size:15.45px;letter-spacing:-0.45px;color:#7a7a7a">代码库</div><div class="t" style="left:596px;top:1021px;font-size:15.45px;letter-spacing:-1.242px;color:#7a7a7a">EA</div><div class="t" style="left:640px;top:1021px;font-size:15.45px;letter-spacing:-0.45px;color:#7a7a7a">日志</div><div class="a" style="left:78px;top:1022px;width:1px;height:18px;background:#6a6a6a"></div><div class="a" style="left:273px;top:1022px;width:1px;height:18px;background:#6a6a6a"></div><div class="a" style="left:328px;top:1022px;width:1px;height:18px;background:#6a6a6a"></div><div class="a" style="left:393px;top:1022px;width:1px;height:18px;background:#6a6a6a"></div><div class="a" style="left:448px;top:1022px;width:1px;height:18px;background:#6a6a6a"></div><div class="a" style="left:513px;top:1022px;width:1px;height:18px;background:#6a6a6a"></div><div class="a" style="left:583px;top:1022px;width:1px;height:18px;background:#6a6a6a"></div><div class="a" style="left:627px;top:1022px;width:1px;height:18px;background:#6a6a6a"></div><div class="a" style="left:682px;top:1022px;width:1px;height:18px;background:#6a6a6a"></div><div class="t" style="left:373px;top:1024px;font-size:13px;letter-spacing:0.271px;color:#ff2020;font-weight:bold">7</div><div class="t" style="left:494px;top:1024px;font-size:13px;letter-spacing:0.271px;color:#ff2020;font-weight:bold">3</div><div class="a" style="left:0px;top:1049px;width:1918px;height:1px;background:#c8c8c8"></div><div class="a" style="left:0px;top:1050px;width:1918px;height:1px;background:#a0a0a0"></div><div class="a" style="left:0px;top:1051px;width:1918px;height:1px;background:#fff"></div><div class="a" style="left:0px;top:1055px;width:1918px;height:23px;background:#f0f0f0"></div><div class="t" style="left:2px;top:1058px;font-size:15.45px;letter-spacing:-0.504px;">寻求帮助,请按F1键</div><div class="t" style="left:953px;top:1058px;font-size:15.45px;letter-spacing:0.456px;">Default</div><div class="a" style="left:947px;top:1056px;width:1px;height:22px;background:#9a9a9a"></div><div class="a" style="left:1103px;top:1056px;width:1px;height:22px;background:#9a9a9a"></div><div class="a" style="left:1247px;top:1056px;width:1px;height:22px;background:#9a9a9a"></div><div class="a" style="left:1345px;top:1056px;width:1px;height:22px;background:#9a9a9a"></div><div class="a" style="left:1443px;top:1056px;width:1px;height:22px;background:#9a9a9a"></div><div class="a" style="left:1538px;top:1056px;width:1px;height:22px;background:#9a9a9a"></div><div class="a" style="left:1634px;top:1056px;width:1px;height:22px;background:#9a9a9a"></div><div class="a" style="left:1725px;top:1056px;width:1px;height:22px;background:#9a9a9a"></div><div class="a" style="left:1730px;top:1058px;width:3px;height:11px;background:#5a7d00"></div><div class="a" style="left:1730px;top:1070px;width:3px;height:4px;background:#003b5c"></div><div class="a" style="left:1734px;top:1058px;width:3px;height:10px;background:#5a7d00"></div><div class="a" style="left:1734px;top:1069px;width:3px;height:5px;background:#003b5c"></div><div class="a" style="left:1738px;top:1058px;width:3px;height:9px;background:#5a7d00"></div><div class="a" style="left:1738px;top:1068px;width:3px;height:6px;background:#003b5c"></div><div class="a" style="left:1742px;top:1058px;width:3px;height:8px;background:#5a7d00"></div><div class="a" style="left:1742px;top:1067px;width:3px;height:7px;background:#003b5c"></div><div class="a" style="left:1746px;top:1058px;width:3px;height:6px;background:#5a7d00"></div><div class="a" style="left:1746px;top:1065px;width:3px;height:9px;background:#003b5c"></div><div class="a" style="left:1750px;top:1058px;width:3px;height:5px;background:#5a7d00"></div><div class="a" style="left:1750px;top:1064px;width:3px;height:10px;background:#003b5c"></div><div class="a" style="left:1754px;top:1058px;width:3px;height:4px;background:#5a7d00"></div><div class="a" style="left:1754px;top:1063px;width:3px;height:11px;background:#003b5c"></div><div class="a" style="left:1758px;top:1058px;width:3px;height:3px;background:#5a7d00"></div><div class="a" style="left:1758px;top:1062px;width:3px;height:12px;background:#003b5c"></div><div class="t" style="left:1767px;top:1058px;font-size:15.45px;letter-spacing:0.514px;">295638/35 kb</div><div class="a" style="left:0;top:0;width:1918px;height:1078px;overflow:hidden;pointer-events:none"><div class="a" style="left:125px;top:122px;font-size:36px;font-weight:bold;line-height:40px;letter-spacing:0;color:rgba(255,255,255,.135);-webkit-text-stroke:1.200px rgba(50,50,50,.17);paint-order:stroke fill;transform:translate(-50%,-50%) rotate(-34deg)">EAHub.cn</div><div class="a" style="left:375px;top:122px;font-size:36px;font-weight:bold;line-height:40px;letter-spacing:0;color:rgba(255,255,255,.135);-webkit-text-stroke:1.200px rgba(50,50,50,.17);paint-order:stroke fill;transform:translate(-50%,-50%) rotate(-34deg)">EAHub.cn</div><div class="a" style="left:625px;top:122px;font-size:36px;font-weight:bold;line-height:40px;letter-spacing:0;color:rgba(255,255,255,.135);-webkit-text-stroke:1.200px rgba(50,50,50,.17);paint-order:stroke fill;transform:translate(-50%,-50%) rotate(-34deg)">EAHub.cn</div><div class="a" style="left:875px;top:122px;font-size:36px;font-weight:bold;line-height:40px;letter-spacing:0;color:rgba(255,255,255,.135);-webkit-text-stroke:1.200px rgba(50,50,50,.17);paint-order:stroke fill;transform:translate(-50%,-50%) rotate(-34deg)">EAHub.cn</div><div class="a" style="left:1125px;top:122px;font-size:36px;font-weight:bold;line-height:40px;letter-spacing:0;color:rgba(255,255,255,.135);-webkit-text-stroke:1.200px rgba(50,50,50,.17);paint-order:stroke fill;transform:translate(-50%,-50%) rotate(-34deg)">EAHub.cn</div><div class="a" style="left:1375px;top:122px;font-size:36px;font-weight:bold;line-height:40px;letter-spacing:0;color:rgba(255,255,255,.135);-webkit-text-stroke:1.200px rgba(50,50,50,.17);paint-order:stroke fill;transform:translate(-50%,-50%) rotate(-34deg)">EAHub.cn</div><div class="a" style="left:1625px;top:122px;font-size:36px;font-weight:bold;line-height:40px;letter-spacing:0;color:rgba(255,255,255,.135);-webkit-text-stroke:1.200px rgba(50,50,50,.17);paint-order:stroke fill;transform:translate(-50%,-50%) rotate(-34deg)">EAHub.cn</div><div class="a" style="left:1875px;top:122px;font-size:36px;font-weight:bold;line-height:40px;letter-spacing:0;color:rgba(255,255,255,.135);-webkit-text-stroke:1.200px rgba(50,50,50,.17);paint-order:stroke fill;transform:translate(-50%,-50%) rotate(-34deg)">EAHub.cn</div><div class="a" style="left:125px;top:372px;font-size:36px;font-weight:bold;line-height:40px;letter-spacing:0;color:rgba(255,255,255,.135);-webkit-text-stroke:1.200px rgba(50,50,50,.17);paint-order:stroke fill;transform:translate(-50%,-50%) rotate(-34deg)">EAHub.cn</div><div class="a" style="left:375px;top:372px;font-size:36px;font-weight:bold;line-height:40px;letter-spacing:0;color:rgba(255,255,255,.135);-webkit-text-stroke:1.200px rgba(50,50,50,.17);paint-order:stroke fill;transform:translate(-50%,-50%) rotate(-34deg)">EAHub.cn</div><div class="a" style="left:625px;top:372px;font-size:36px;font-weight:bold;line-height:40px;letter-spacing:0;color:rgba(255,255,255,.135);-webkit-text-stroke:1.200px rgba(50,50,50,.17);paint-order:stroke fill;transform:translate(-50%,-50%) rotate(-34deg)">EAHub.cn</div><div class="a" style="left:875px;top:372px;font-size:36px;font-weight:bold;line-height:40px;letter-spacing:0;color:rgba(255,255,255,.135);-webkit-text-stroke:1.200px rgba(50,50,50,.17);paint-order:stroke fill;transform:translate(-50%,-50%) rotate(-34deg)">EAHub.cn</div><div class="a" style="left:1125px;top:372px;font-size:36px;font-weight:bold;line-height:40px;letter-spacing:0;color:rgba(255,255,255,.135);-webkit-text-stroke:1.200px rgba(50,50,50,.17);paint-order:stroke fill;transform:translate(-50%,-50%) rotate(-34deg)">EAHub.cn</div><div class="a" style="left:1375px;top:372px;font-size:36px;font-weight:bold;line-height:40px;letter-spacing:0;color:rgba(255,255,255,.135);-webkit-text-stroke:1.200px rgba(50,50,50,.17);paint-order:stroke fill;transform:translate(-50%,-50%) rotate(-34deg)">EAHub.cn</div><div class="a" style="left:1625px;top:372px;font-size:36px;font-weight:bold;line-height:40px;letter-spacing:0;color:rgba(255,255,255,.135);-webkit-text-stroke:1.200px rgba(50,50,50,.17);paint-order:stroke fill;transform:translate(-50%,-50%) rotate(-34deg)">EAHub.cn</div><div class="a" style="left:1875px;top:372px;font-size:36px;font-weight:bold;line-height:40px;letter-spacing:0;color:rgba(255,255,255,.135);-webkit-text-stroke:1.200px rgba(50,50,50,.17);paint-order:stroke fill;transform:translate(-50%,-50%) rotate(-34deg)">EAHub.cn</div><div class="a" style="left:125px;top:622px;font-size:36px;font-weight:bold;line-height:40px;letter-spacing:0;color:rgba(255,255,255,.135);-webkit-text-stroke:1.200px rgba(50,50,50,.17);paint-order:stroke fill;transform:translate(-50%,-50%) rotate(-34deg)">EAHub.cn</div><div class="a" style="left:375px;top:622px;font-size:36px;font-weight:bold;line-height:40px;letter-spacing:0;color:rgba(255,255,255,.135);-webkit-text-stroke:1.200px rgba(50,50,50,.17);paint-order:stroke fill;transform:translate(-50%,-50%) rotate(-34deg)">EAHub.cn</div><div class="a" style="left:625px;top:622px;font-size:36px;font-weight:bold;line-height:40px;letter-spacing:0;color:rgba(255,255,255,.135);-webkit-text-stroke:1.200px rgba(50,50,50,.17);paint-order:stroke fill;transform:translate(-50%,-50%) rotate(-34deg)">EAHub.cn</div><div class="a" style="left:875px;top:622px;font-size:36px;font-weight:bold;line-height:40px;letter-spacing:0;color:rgba(255,255,255,.135);-webkit-text-stroke:1.200px rgba(50,50,50,.17);paint-order:stroke fill;transform:translate(-50%,-50%) rotate(-34deg)">EAHub.cn</div><div class="a" style="left:1125px;top:622px;font-size:36px;font-weight:bold;line-height:40px;letter-spacing:0;color:rgba(255,255,255,.135);-webkit-text-stroke:1.200px rgba(50,50,50,.17);paint-order:stroke fill;transform:translate(-50%,-50%) rotate(-34deg)">EAHub.cn</div><div class="a" style="left:1375px;top:622px;font-size:36px;font-weight:bold;line-height:40px;letter-spacing:0;color:rgba(255,255,255,.135);-webkit-text-stroke:1.200px rgba(50,50,50,.17);paint-order:stroke fill;transform:translate(-50%,-50%) rotate(-34deg)">EAHub.cn</div><div class="a" style="left:1625px;top:622px;font-size:36px;font-weight:bold;line-height:40px;letter-spacing:0;color:rgba(255,255,255,.135);-webkit-text-stroke:1.200px rgba(50,50,50,.17);paint-order:stroke fill;transform:translate(-50%,-50%) rotate(-34deg)">EAHub.cn</div><div class="a" style="left:1875px;top:622px;font-size:36px;font-weight:bold;line-height:40px;letter-spacing:0;color:rgba(255,255,255,.135);-webkit-text-stroke:1.200px rgba(50,50,50,.17);paint-order:stroke fill;transform:translate(-50%,-50%) rotate(-34deg)">EAHub.cn</div><div class="a" style="left:125px;top:872px;font-size:36px;font-weight:bold;line-height:40px;letter-spacing:0;color:rgba(255,255,255,.135);-webkit-text-stroke:1.200px rgba(50,50,50,.17);paint-order:stroke fill;transform:translate(-50%,-50%) rotate(-34deg)">EAHub.cn</div><div class="a" style="left:375px;top:872px;font-size:36px;font-weight:bold;line-height:40px;letter-spacing:0;color:rgba(255,255,255,.135);-webkit-text-stroke:1.200px rgba(50,50,50,.17);paint-order:stroke fill;transform:translate(-50%,-50%) rotate(-34deg)">EAHub.cn</div><div class="a" style="left:625px;top:872px;font-size:36px;font-weight:bold;line-height:40px;letter-spacing:0;color:rgba(255,255,255,.135);-webkit-text-stroke:1.200px rgba(50,50,50,.17);paint-order:stroke fill;transform:translate(-50%,-50%) rotate(-34deg)">EAHub.cn</div><div class="a" style="left:875px;top:872px;font-size:36px;font-weight:bold;line-height:40px;letter-spacing:0;color:rgba(255,255,255,.135);-webkit-text-stroke:1.200px rgba(50,50,50,.17);paint-order:stroke fill;transform:translate(-50%,-50%) rotate(-34deg)">EAHub.cn</div><div class="a" style="left:1125px;top:872px;font-size:36px;font-weight:bold;line-height:40px;letter-spacing:0;color:rgba(255,255,255,.135);-webkit-text-stroke:1.200px rgba(50,50,50,.17);paint-order:stroke fill;transform:translate(-50%,-50%) rotate(-34deg)">EAHub.cn</div><div class="a" style="left:1375px;top:872px;font-size:36px;font-weight:bold;line-height:40px;letter-spacing:0;color:rgba(255,255,255,.135);-webkit-text-stroke:1.200px rgba(50,50,50,.17);paint-order:stroke fill;transform:translate(-50%,-50%) rotate(-34deg)">EAHub.cn</div><div class="a" style="left:1625px;top:872px;font-size:36px;font-weight:bold;line-height:40px;letter-spacing:0;color:rgba(255,255,255,.135);-webkit-text-stroke:1.200px rgba(50,50,50,.17);paint-order:stroke fill;transform:translate(-50%,-50%) rotate(-34deg)">EAHub.cn</div><div class="a" style="left:1875px;top:872px;font-size:36px;font-weight:bold;line-height:40px;letter-spacing:0;color:rgba(255,255,255,.135);-webkit-text-stroke:1.200px rgba(50,50,50,.17);paint-order:stroke fill;transform:translate(-50%,-50%) rotate(-34deg)">EAHub.cn</div><div class="a" style="left:125px;top:1122px;font-size:36px;font-weight:bold;line-height:40px;letter-spacing:0;color:rgba(255,255,255,.135);-webkit-text-stroke:1.200px rgba(50,50,50,.17);paint-order:stroke fill;transform:translate(-50%,-50%) rotate(-34deg)">EAHub.cn</div><div class="a" style="left:375px;top:1122px;font-size:36px;font-weight:bold;line-height:40px;letter-spacing:0;color:rgba(255,255,255,.135);-webkit-text-stroke:1.200px rgba(50,50,50,.17);paint-order:stroke fill;transform:translate(-50%,-50%) rotate(-34deg)">EAHub.cn</div><div class="a" style="left:625px;top:1122px;font-size:36px;font-weight:bold;line-height:40px;letter-spacing:0;color:rgba(255,255,255,.135);-webkit-text-stroke:1.200px rgba(50,50,50,.17);paint-order:stroke fill;transform:translate(-50%,-50%) rotate(-34deg)">EAHub.cn</div><div class="a" style="left:875px;top:1122px;font-size:36px;font-weight:bold;line-height:40px;letter-spacing:0;color:rgba(255,255,255,.135);-webkit-text-stroke:1.200px rgba(50,50,50,.17);paint-order:stroke fill;transform:translate(-50%,-50%) rotate(-34deg)">EAHub.cn</div><div class="a" style="left:1125px;top:1122px;font-size:36px;font-weight:bold;line-height:40px;letter-spacing:0;color:rgba(255,255,255,.135);-webkit-text-stroke:1.200px rgba(50,50,50,.17);paint-order:stroke fill;transform:translate(-50%,-50%) rotate(-34deg)">EAHub.cn</div><div class="a" style="left:1375px;top:1122px;font-size:36px;font-weight:bold;line-height:40px;letter-spacing:0;color:rgba(255,255,255,.135);-webkit-text-stroke:1.200px rgba(50,50,50,.17);paint-order:stroke fill;transform:translate(-50%,-50%) rotate(-34deg)">EAHub.cn</div><div class="a" style="left:1625px;top:1122px;font-size:36px;font-weight:bold;line-height:40px;letter-spacing:0;color:rgba(255,255,255,.135);-webkit-text-stroke:1.200px rgba(50,50,50,.17);paint-order:stroke fill;transform:translate(-50%,-50%) rotate(-34deg)">EAHub.cn</div><div class="a" style="left:1875px;top:1122px;font-size:36px;font-weight:bold;line-height:40px;letter-spacing:0;color:rgba(255,255,255,.135);-webkit-text-stroke:1.200px rgba(50,50,50,.17);paint-order:stroke fill;transform:translate(-50%,-50%) rotate(-34deg)">EAHub.cn</div></div></body></html>
